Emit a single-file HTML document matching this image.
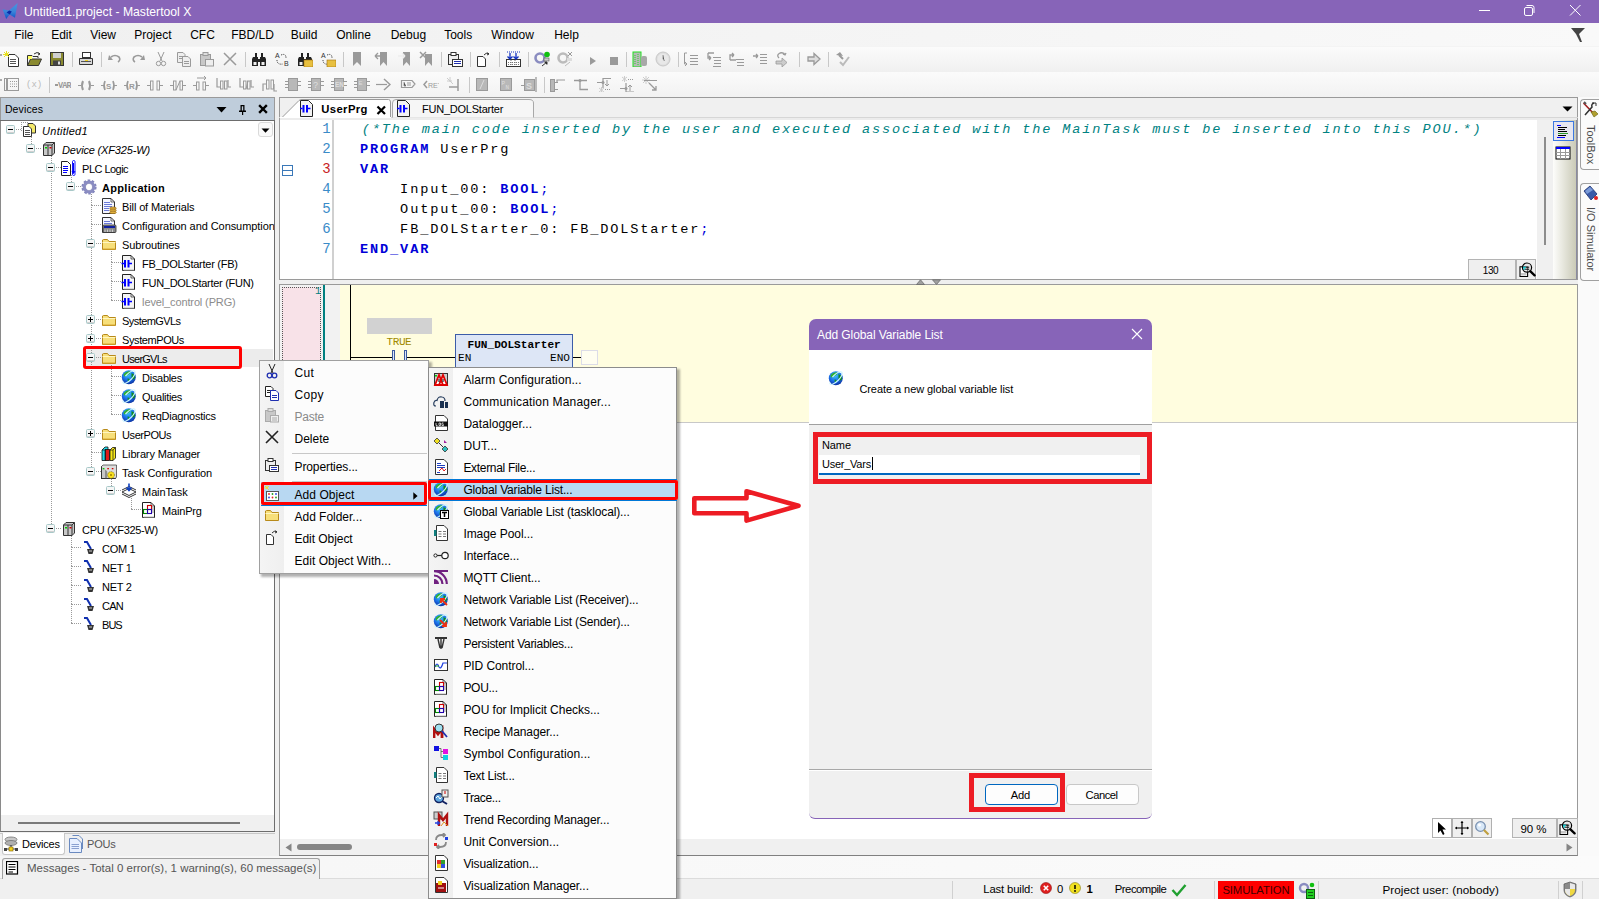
<!DOCTYPE html>
<html><head><meta charset="utf-8"><title>Mastertool X</title>
<style>
html,body{margin:0;padding:0;}
body{width:1599px;height:899px;overflow:hidden;position:relative;background:#f0f0f0;font-family:"Liberation Sans",sans-serif;}
body div, body svg{position:absolute;box-sizing:border-box;}
.t{white-space:pre;line-height:1;}
</style></head><body>
<div style="left:0px;top:0px;width:1599px;height:23px;background:#8764b8"></div>
<svg style="left:0px;top:0px;" width="20" height="22" viewBox="0 0 20 22"><defs><linearGradient id="lg1" x1="0" y1="0" x2="0" y2="1"><stop offset="0" stop-color="#4a94e0"/><stop offset="0.55" stop-color="#3a84d8"/><stop offset="1" stop-color="#0a50c8"/></linearGradient></defs><path d="M2.6 9.2 L9 10.6 L17.6 3 L15 17.8 L9.6 14.6 L6.2 19 Z" fill="url(#lg1)"/><path d="M6.6 12.6 L9.2 10.6 L11.8 11.6 L9.8 14.6 Z" fill="#0a2aa8"/></svg>
<div class="t" style="left:24px;top:5.67px;font-size:12.2px;color:#fff;font-weight:normal;font-style:normal;font-family:'Liberation Sans';">Untitled1.project - Mastertool X</div>
<div style="left:1479px;top:10px;width:11px;height:1px;background:#fff"></div>
<svg style="left:1522px;top:4px;" width="14" height="13" viewBox="0 0 14 13"><rect x="2.5" y="3.5" width="8" height="8" rx="1.5" fill="none" stroke="#fff"/><path d="M4.5 1.5 H10 a2 2 0 0 1 2 2 V9" fill="none" stroke="#fff"/></svg>
<svg style="left:1569px;top:4px;" width="13" height="13" viewBox="0 0 13 13"><path d="M1 1 L11.5 11.5 M11.5 1 L1 11.5" stroke="#fff" stroke-width="1"/></svg>
<div style="left:0px;top:23px;width:1599px;height:23px;background:linear-gradient(to right,#f0f0f0 0px,#f3f3f3 600px,#f9f9f9 1599px)"></div>
<div class="t" style="left:14.2px;top:28.84px;font-size:12px;color:#000;font-weight:normal;font-style:normal;font-family:'Liberation Sans';">File</div>
<div class="t" style="left:51.2px;top:28.84px;font-size:12px;color:#000;font-weight:normal;font-style:normal;font-family:'Liberation Sans';">Edit</div>
<div class="t" style="left:90.2px;top:28.84px;font-size:12px;color:#000;font-weight:normal;font-style:normal;font-family:'Liberation Sans';">View</div>
<div class="t" style="left:134.2px;top:28.84px;font-size:12px;color:#000;font-weight:normal;font-style:normal;font-family:'Liberation Sans';">Project</div>
<div class="t" style="left:190.2px;top:28.84px;font-size:12px;color:#000;font-weight:normal;font-style:normal;font-family:'Liberation Sans';">CFC</div>
<div class="t" style="left:231.2px;top:28.84px;font-size:12px;color:#000;font-weight:normal;font-style:normal;font-family:'Liberation Sans';">FBD/LD</div>
<div class="t" style="left:290.7px;top:28.84px;font-size:12px;color:#000;font-weight:normal;font-style:normal;font-family:'Liberation Sans';">Build</div>
<div class="t" style="left:336.2px;top:28.84px;font-size:12px;color:#000;font-weight:normal;font-style:normal;font-family:'Liberation Sans';">Online</div>
<div class="t" style="left:390.7px;top:28.84px;font-size:12px;color:#000;font-weight:normal;font-style:normal;font-family:'Liberation Sans';">Debug</div>
<div class="t" style="left:444.2px;top:28.84px;font-size:12px;color:#000;font-weight:normal;font-style:normal;font-family:'Liberation Sans';">Tools</div>
<div class="t" style="left:491.2px;top:28.84px;font-size:12px;color:#000;font-weight:normal;font-style:normal;font-family:'Liberation Sans';">Window</div>
<div class="t" style="left:554.2px;top:28.84px;font-size:12px;color:#000;font-weight:normal;font-style:normal;font-family:'Liberation Sans';">Help</div>
<svg style="left:1570px;top:27px;" width="16" height="16" viewBox="0 0 16 16"><path d="M1 1 H15 L9 7 L12 15 L10 15 L6 7 Z" fill="#444"/></svg>
<div style="left:0px;top:46px;width:1599px;height:1px;background:#f4f4f4"></div>
<div style="left:0px;top:47px;width:1599px;height:25px;background:linear-gradient(#fbfbfb,#f0f0f0)"></div>
<div style="left:0px;top:72px;width:1599px;height:25px;background:linear-gradient(#fbfbfb,#f2f2f2)"></div>
<svg style="left:3px;top:51px;" width="16" height="16" viewBox="0 0 16 16"><path d="M5.5 3.5 H12 L15.5 7 V15.5 H5.5 Z" fill="#fff" stroke="#333"/><path d="M7 8.5 H13 M7 10.5 H13 M7 12.5 H13" stroke="#555"/><path d="M1 1 L6 6 M3.5 0 V5 M0 3.5 H6 M6 1 L1 6" stroke="#e8e020" stroke-width="1"/></svg>
<svg style="left:26px;top:51px;" width="16" height="16" viewBox="0 0 16 16"><path d="M1.5 4.5 H6 L7 5.5 H12 V7" fill="none" stroke="#333"/><path d="M1.5 4.5 V14.5 H12.5 L15.5 8 H4.5 L1.5 14.5" fill="#8a8a30" stroke="#333"/><path d="M2 5 H6 V8 H2 Z" fill="#ffff60"/><path d="M8 3 Q11 0 14 3 M12.5 1.5 L14 3 L12 4" fill="none" stroke="#333"/></svg>
<svg style="left:49px;top:51px;" width="16" height="16" viewBox="0 0 16 16"><rect x="1.5" y="1.5" width="13" height="13" fill="#8a8a30" stroke="#333"/><rect x="4" y="2" width="8" height="5" fill="#d0d0d0"/><rect x="4" y="9.5" width="8" height="5" fill="#444"/><rect x="9" y="10.5" width="2" height="3" fill="#ddd"/></svg>
<div style="left:72px;top:52px;width:1px;height:15px;background:#c8c8c8"></div>
<svg style="left:78px;top:51px;" width="16" height="16" viewBox="0 0 16 16"><rect x="4.5" y="1.5" width="8" height="5" fill="#fff" stroke="#333"/><path d="M1.5 7.5 H14.5 V13.5 H1.5 Z" fill="#d8d8d8" stroke="#333"/><path d="M3 10.5 H13" stroke="#555"/><rect x="7" y="9" width="3" height="1" fill="#f0d020"/></svg>
<div style="left:101px;top:52px;width:1px;height:15px;background:#c8c8c8"></div>
<svg style="left:107px;top:51px;" width="16" height="16" viewBox="0 0 16 16"><path d="M4 6 Q8 3 12 6 Q14 9 11 11" fill="none" stroke="#9a9a9a" stroke-width="1.6"/><path d="M2 4 L6 9 L1 9 Z" fill="#9a9a9a"/></svg>
<svg style="left:130px;top:51px;" width="16" height="16" viewBox="0 0 16 16"><path d="M12 6 Q8 3 4 6 Q2 9 5 11" fill="none" stroke="#9a9a9a" stroke-width="1.6"/><path d="M14 4 L10 9 L15 9 Z" fill="#9a9a9a"/></svg>
<svg style="left:153px;top:51px;" width="16" height="16" viewBox="0 0 16 16"><path d="M5 1 L9 10 M11 1 L7 10" stroke="#9a9a9a"/><circle cx="5.5" cy="12.5" r="2.2" fill="none" stroke="#9a9a9a"/><circle cx="10.5" cy="12.5" r="2.2" fill="none" stroke="#9a9a9a"/></svg>
<svg style="left:176px;top:51px;" width="16" height="16" viewBox="0 0 16 16"><path d="M1.5 1.5 H7 L9 3.5 V11.5 H1.5 Z" fill="#eee" stroke="#9a9a9a"/><path d="M6.5 5.5 H12 L14.5 8 V15.5 H6.5 Z" fill="#eee" stroke="#9a9a9a"/><path d="M8 10.5 H13 M8 12.5 H13 M3 5.5 H7 M3 7.5 H6" stroke="#9a9a9a"/></svg>
<svg style="left:199px;top:51px;" width="16" height="16" viewBox="0 0 16 16"><rect x="1.5" y="3.5" width="10" height="11" fill="#c8c8c8" stroke="#9a9a9a"/><rect x="4" y="1.5" width="5" height="3" fill="#ddd" stroke="#9a9a9a"/><rect x="6.5" y="8.5" width="8" height="6.5" fill="#eee" stroke="#9a9a9a"/></svg>
<svg style="left:222px;top:51px;" width="16" height="16" viewBox="0 0 16 16"><path d="M2 2 L14 14 M14 2 L2 14" stroke="#9a9a9a" stroke-width="1.5"/></svg>
<div style="left:245px;top:52px;width:1px;height:15px;background:#c8c8c8"></div>
<svg style="left:250.5px;top:51px;" width="16" height="16" viewBox="0 0 16 16"><path d="M2 6 H7 V15 H1 V8 Z M9 6 H14 L15 8 V15 H9 Z" fill="#222"/><rect x="4" y="2" width="2" height="4" fill="#222"/><rect x="10" y="2" width="2" height="4" fill="#222"/><rect x="7" y="8" width="2" height="3" fill="#222"/><rect x="2.5" y="11" width="3" height="3" fill="#eee"/><rect x="10.5" y="11" width="3" height="3" fill="#eee"/></svg>
<svg style="left:273.5px;top:51px;" width="16" height="16" viewBox="0 0 16 16"><text x="1" y="7" font-size="7" font-family="Liberation Sans" fill="#333">A</text><text x="10" y="15" font-size="7" font-family="Liberation Sans" fill="#333">B</text><path d="M3 9 Q3 14 9 13 M7 4 Q12 2 12 7" fill="none" stroke="#333" stroke-dasharray="1 1"/></svg>
<svg style="left:296.5px;top:51px;" width="16" height="16" viewBox="0 0 16 16"><path d="M2 6 H7 V15 H1 V8 Z M9 6 H14 L15 8 V15 H9 Z" fill="#222"/><rect x="4" y="2" width="2" height="4" fill="#222"/><rect x="10" y="2" width="2" height="4" fill="#222"/><rect x="7" y="8" width="2" height="3" fill="#222"/><rect x="2.5" y="11" width="3" height="3" fill="#eee"/><rect x="10.5" y="11" width="3" height="3" fill="#eee"/><rect x="7" y="9" width="9" height="7" fill="#e8c040" stroke="#a07010" stroke-width="0.6"/></svg>
<svg style="left:319.5px;top:51px;" width="16" height="16" viewBox="0 0 16 16"><text x="1" y="7" font-size="7" font-family="Liberation Sans" fill="#333">A</text><text x="10" y="15" font-size="7" font-family="Liberation Sans" fill="#333">B</text><path d="M3 9 Q3 14 9 13 M7 4 Q12 2 12 7" fill="none" stroke="#333" stroke-dasharray="1 1"/><rect x="7" y="9" width="9" height="7" fill="#e8c040" stroke="#a07010" stroke-width="0.6"/></svg>
<div style="left:343px;top:52px;width:1px;height:15px;background:#c8c8c8"></div>
<svg style="left:349px;top:51px;" width="16" height="16" viewBox="0 0 16 16"><path d="M4 1 H12 V15 L8 11 L4 15 Z" fill="#9a9a9a"/></svg>
<svg style="left:373.5px;top:51px;" width="16" height="16" viewBox="0 0 16 16"><path d="M6 1 H13 V15 L9.5 11 L6 15 Z" fill="#9a9a9a"/><path d="M1 5 H7 M1 5 L4 2 M1 5 L4 8" stroke="#9a9a9a" stroke-width="1.3"/></svg>
<svg style="left:396.5px;top:51px;" width="16" height="16" viewBox="0 0 16 16"><path d="M6 1 H13 V15 L9.5 11 L6 15 Z" fill="#9a9a9a"/><path d="M1 5 H8 M8 5 L5 2 M8 5 L5 8" stroke="#eee" stroke-width="1.3"/></svg>
<svg style="left:419px;top:51px;" width="16" height="16" viewBox="0 0 16 16"><path d="M6 3 H13 V15 L9.5 11 L6 15 Z" fill="#9a9a9a"/><path d="M1 1 L7 7 M7 1 L1 7" stroke="#9a9a9a" stroke-width="1.5"/></svg>
<div style="left:441px;top:52px;width:1px;height:15px;background:#c8c8c8"></div>
<svg style="left:447px;top:51px;" width="16" height="16" viewBox="0 0 16 16"><rect x="1.5" y="3.5" width="10" height="10" fill="#eee" stroke="#333"/><rect x="4" y="1.5" width="5" height="3" fill="#fff" stroke="#333"/><rect x="5.5" y="8.5" width="10" height="7" fill="#fff" stroke="#333"/><path d="M7 10.5 H14 M7 12.5 H14" stroke="#2030b0"/></svg>
<div style="left:470px;top:52px;width:1px;height:15px;background:#c8c8c8"></div>
<svg style="left:476px;top:51px;" width="16" height="16" viewBox="0 0 16 16"><path d="M1.5 5.5 H7 L9.5 8 V15.5 H1.5 Z" fill="#fff" stroke="#333"/><path d="M8 4 Q10 1 13 3 M11.5 1.5 L13 3 L11 4" fill="none" stroke="#333"/></svg>
<div style="left:499px;top:52px;width:1px;height:15px;background:#c8c8c8"></div>
<svg style="left:505px;top:51px;" width="16" height="16" viewBox="0 0 16 16"><rect x="1.5" y="8.5" width="14" height="7" fill="#fff" stroke="#333"/><path d="M3 11.5 H14 M3 13.5 H14 M6 9 V15 M10 9 V15" stroke="#777" stroke-dasharray="1 1"/><path d="M5 2 V8 M2.5 5.5 L5 8 L7.5 5.5 M11 2 V8 M8.5 5.5 L11 8 L13.5 5.5" stroke="#1030c0" stroke-width="1.3" fill="none"/><path d="M2 1 H15" stroke="#1030c0" stroke-dasharray="1 1"/></svg>
<div style="left:528px;top:52px;width:1px;height:15px;background:#c8c8c8"></div>
<svg style="left:534px;top:51px;" width="16" height="16" viewBox="0 0 16 16"><circle cx="6" cy="7" r="4.5" fill="none" stroke="#8a8cc0" stroke-width="2.6"/><circle cx="13" cy="3.5" r="2.8" fill="#10c010"/><rect x="10" y="7" width="5" height="3" fill="#ccc" stroke="#555" stroke-width="0.6"/><path d="M8 15 L13 11 M10.5 11 H13 V13.5" stroke="#333"/></svg>
<svg style="left:557px;top:51px;" width="16" height="16" viewBox="0 0 16 16"><circle cx="6" cy="7" r="4.5" fill="none" stroke="#bbb" stroke-width="2.6"/><path d="M11 1 L15 5 M15 1 L11 5" stroke="#9a9a9a"/><rect x="10" y="7" width="5" height="3" fill="#ddd"/><path d="M8 15 L13 11" stroke="#bbb"/></svg>
<svg style="left:585px;top:51px;" width="16" height="16" viewBox="0 0 16 16"><path d="M5 6 L11 10 L5 14 Z" fill="#9a9a9a"/></svg>
<svg style="left:606px;top:51px;" width="16" height="16" viewBox="0 0 16 16"><rect x="4" y="6" width="8" height="8" fill="#9a9a9a"/></svg>
<div style="left:626px;top:52px;width:1px;height:15px;background:#c8c8c8"></div>
<svg style="left:632px;top:51px;" width="16" height="16" viewBox="0 0 16 16"><rect x="1" y="1" width="8" height="15" fill="#b8b8b8" stroke="#20e020"/><path d="M3 4 V13 M6 3 V14" stroke="#20e020" stroke-dasharray="1 1"/><rect x="9" y="5" width="6" height="10" rx="2" fill="#a8a8a8"/></svg>
<svg style="left:655px;top:51px;" width="16" height="16" viewBox="0 0 16 16"><circle cx="8" cy="8" r="7" fill="#ddd" stroke="#c8c8c8"/><circle cx="8" cy="8" r="5.5" fill="#e8e8e8"/><path d="M8 4 V8 L9.5 10" stroke="#999" stroke-width="1"/></svg>
<div style="left:678px;top:52px;width:1px;height:15px;background:#c8c8c8"></div>
<svg style="left:683px;top:51px;" width="16" height="16" viewBox="0 0 16 16"><path d="M4 2 H1.5 V13 H4 M4 13 L2 11 M4 13 L2 15" stroke="#9a9a9a" fill="none"/><path d="M7 4.5 H15 M7 7.5 H15 M7 10.5 H15 M7 13.5 H15" stroke="#9a9a9a"/></svg>
<svg style="left:706px;top:51px;" width="16" height="16" viewBox="0 0 16 16"><path d="M2 2 H8 M2 2 V7 H5 M5 7 L3 5 M5 7 L3 9" stroke="#9a9a9a" fill="none" stroke-width="1.3"/><path d="M7 6.5 H15 M8 9.5 H15 M8 12.5 H15 M7 15.5 H15" stroke="#9a9a9a"/></svg>
<svg style="left:729px;top:51px;" width="16" height="16" viewBox="0 0 16 16"><path d="M1 9 V4 H5 M5 4 L3 2 M5 4 L3 6 M1 9 H7" stroke="#9a9a9a" fill="none" stroke-width="1.3"/><path d="M7 8.5 H15 M8 11.5 H15 M8 14.5 H15" stroke="#9a9a9a"/></svg>
<svg style="left:752px;top:51px;" width="16" height="16" viewBox="0 0 16 16"><path d="M1 5 H6 M6 5 L4 3 M6 5 L4 7" stroke="#9a9a9a" stroke-width="1.3" fill="none"/><path d="M8 3.5 H15 M8 6.5 H15 M8 9.5 H15 M8 12.5 H15" stroke="#9a9a9a"/></svg>
<svg style="left:775px;top:51px;" width="16" height="16" viewBox="0 0 16 16"><path d="M4 7 Q1 4 5 2 Q9 1 10 4 M8 3 L10 4 L11 2" fill="none" stroke="#9a9a9a" stroke-width="1.3"/><path d="M1 10 H7 V7 L12 11.5 L7 16 V13 H1 Z" fill="#ccc" stroke="#9a9a9a" stroke-width="0.8"/></svg>
<div style="left:799px;top:52px;width:1px;height:15px;background:#c8c8c8"></div>
<svg style="left:806px;top:51px;" width="16" height="16" viewBox="0 0 16 16"><path d="M2 6 H8 V2.5 L14 8 L8 13.5 V10 H2 Z" fill="#ddd" stroke="#9a9a9a" stroke-width="1.3"/></svg>
<div style="left:828px;top:52px;width:1px;height:15px;background:#c8c8c8"></div>
<svg style="left:834px;top:51px;" width="16" height="16" viewBox="0 0 16 16"><path d="M2 4 L6 1 L9 5 Z" fill="#9a9a9a"/><path d="M5 4 L9 8" stroke="#9a9a9a" stroke-width="2"/><path d="M6 11 L9 14 L15 6" fill="none" stroke="#bbb" stroke-width="2"/></svg>
<svg style="left:3px;top:76px;" width="16" height="16" viewBox="0 0 16 16"><rect x="1.5" y="2.5" width="14" height="12" fill="none" stroke="#9a9a9a"/><path d="M4 3 V15" stroke="#9a9a9a" stroke-width="2"/><path d="M7 5.5 H15 M7 8 H15 M7 10.5 H15" stroke="#9a9a9a" stroke-dasharray="1 1"/></svg>
<svg style="left:26px;top:76px;" width="16" height="16" viewBox="0 0 16 16"><text x="0" y="11" font-size="9" font-family="Liberation Mono" fill="#bbb">(x)</text></svg>
<div style="left:49px;top:77px;width:1px;height:16px;background:#c8c8c8"></div>
<svg style="left:54.5px;top:76px;" width="16" height="16" viewBox="0 0 16 16"><rect x="0" y="8" width="3" height="2" fill="#9a9a9a"/><text x="3" y="12" font-size="8.5" font-family="Liberation Mono" font-weight="bold" fill="#9a9a9a" letter-spacing="-0.8">VAR</text></svg>
<svg style="left:78px;top:76px;" width="16" height="16" viewBox="0 0 16 16"><path d="M0 9.5 H3 M13 9.5 H16" stroke="#9a9a9a" stroke-width="1.2"/><path d="M5 5 Q3 9.5 5 14 M11 5 Q13 9.5 11 14" fill="none" stroke="#9a9a9a" stroke-width="2"/></svg>
<svg style="left:101px;top:76px;" width="16" height="16" viewBox="0 0 16 16"><path d="M0 9.5 H3 M13 9.5 H16" stroke="#9a9a9a" stroke-width="1.2"/><path d="M4 5 Q2 9.5 4 14 M12 5 Q14 9.5 12 14" fill="none" stroke="#9a9a9a" stroke-width="1.6"/><text x="5" y="13" font-size="8" font-family="Liberation Sans" font-weight="bold" fill="#9a9a9a">S</text></svg>
<svg style="left:124px;top:76px;" width="16" height="16" viewBox="0 0 16 16"><path d="M0 9.5 H3 M13 9.5 H16" stroke="#9a9a9a" stroke-width="1.2"/><path d="M4 5 Q2 9.5 4 14 M12 5 Q14 9.5 12 14" fill="none" stroke="#9a9a9a" stroke-width="1.6"/><text x="5" y="13" font-size="8" font-family="Liberation Sans" font-weight="bold" fill="#9a9a9a">R</text></svg>
<svg style="left:147px;top:76px;" width="16" height="16" viewBox="0 0 16 16"><path d="M0 9.5 H3 M13 9.5 H16" stroke="#9a9a9a" stroke-width="1.2"/><rect x="3.5" y="5" width="2.5" height="9" fill="none" stroke="#9a9a9a"/><rect x="10" y="5" width="2.5" height="9" fill="none" stroke="#9a9a9a"/></svg>
<svg style="left:170px;top:76px;" width="16" height="16" viewBox="0 0 16 16"><path d="M0 9.5 H3 M13 9.5 H16" stroke="#9a9a9a" stroke-width="1.2"/><rect x="3.5" y="5" width="2.5" height="9" fill="none" stroke="#9a9a9a"/><rect x="10" y="5" width="2.5" height="9" fill="none" stroke="#9a9a9a"/><path d="M6 14 L10 5" stroke="#9a9a9a"/></svg>
<svg style="left:193px;top:76px;" width="16" height="16" viewBox="0 0 16 16"><path d="M0 9.5 H3 M13 9.5 H16" stroke="#9a9a9a" stroke-width="1.2"/><rect x="3.5" y="6" width="2.5" height="8" fill="none" stroke="#9a9a9a"/><rect x="10" y="6" width="2.5" height="8" fill="none" stroke="#9a9a9a"/><path d="M4 2 H13 M11 0 L13 2 L11 4" stroke="#9a9a9a" fill="none"/></svg>
<svg style="left:216px;top:76px;" width="16" height="16" viewBox="0 0 16 16"><path d="M1 2 V11 H4 M12 4 V11 H15" stroke="#9a9a9a" fill="none" stroke-width="1.2"/><rect x="4.5" y="5" width="2.5" height="8" fill="none" stroke="#9a9a9a"/><rect x="8.5" y="5" width="2.5" height="8" fill="none" stroke="#9a9a9a"/></svg>
<svg style="left:239px;top:76px;" width="16" height="16" viewBox="0 0 16 16"><path d="M1 2 V11 H4 M12 4 V11 H15" stroke="#9a9a9a" fill="none" stroke-width="1.2"/><rect x="4.5" y="5" width="2.5" height="8" fill="none" stroke="#9a9a9a"/><rect x="8.5" y="5" width="2.5" height="8" fill="none" stroke="#9a9a9a"/><path d="M7 13 L9 5" stroke="#9a9a9a"/></svg>
<svg style="left:262px;top:76px;" width="16" height="16" viewBox="0 0 16 16"><path d="M1 15 V8 H4 M12 8 V15 H15" stroke="#9a9a9a" fill="none" stroke-width="1.2"/><rect x="4.5" y="4" width="2.5" height="9" fill="none" stroke="#9a9a9a"/><rect x="9" y="4" width="2.5" height="9" fill="none" stroke="#9a9a9a"/></svg>
<svg style="left:285px;top:76px;" width="16" height="16" viewBox="0 0 16 16"><path d="M0 5.5 H3 M0 8.5 H3 M0 11.5 H3 M13 5.5 H16 M13 9.5 H16" stroke="#9a9a9a"/><rect x="3.5" y="2.5" width="9" height="12" fill="#b8b8b8" stroke="#9a9a9a"/></svg>
<svg style="left:308px;top:76px;" width="16" height="16" viewBox="0 0 16 16"><path d="M0 5.5 H3 M0 8.5 H3 M0 11.5 H3 M13 5.5 H16 M13 9.5 H16" stroke="#9a9a9a"/><rect x="3.5" y="2.5" width="9" height="12" fill="#b8b8b8" stroke="#9a9a9a"/><text x="5" y="12" font-size="9" font-family="Liberation Sans" fill="#ddd">?</text></svg>
<svg style="left:331px;top:76px;" width="16" height="16" viewBox="0 0 16 16"><path d="M0 5.5 H3 M0 8.5 H3 M0 11.5 H3 M13 5.5 H16 M13 9.5 H16" stroke="#9a9a9a"/><rect x="3.5" y="2.5" width="9" height="12" fill="#b8b8b8" stroke="#9a9a9a"/><text x="4" y="11" font-size="6.5" font-family="Liberation Sans" font-weight="bold" fill="#ddd">EN</text></svg>
<svg style="left:354px;top:76px;" width="16" height="16" viewBox="0 0 16 16"><path d="M0 5.5 H3 M0 8.5 H3 M0 11.5 H3 M13 5.5 H16 M13 9.5 H16" stroke="#9a9a9a"/><rect x="3.5" y="2.5" width="9" height="12" fill="#b8b8b8" stroke="#9a9a9a"/><text x="4.5" y="9" font-size="6" font-family="Liberation Sans" fill="#ddd">E</text></svg>
<svg style="left:375px;top:76px;" width="16" height="16" viewBox="0 0 16 16"><path d="M1 8.5 H12" stroke="#9a9a9a" stroke-width="1.2"/><path d="M9 3 L15 8.5 L9 14" fill="none" stroke="#9a9a9a" stroke-width="1.5"/></svg>
<svg style="left:400px;top:76px;" width="16" height="16" viewBox="0 0 16 16"><path d="M1.5 4.5 H12 L15 8 L12 11.5 H1.5 Z" fill="none" stroke="#9a9a9a" stroke-width="1.2"/><path d="M4 6 V10 H6 M8 6 V10 M10 6 V10" stroke="#9a9a9a"/></svg>
<svg style="left:423px;top:76px;" width="16" height="16" viewBox="0 0 16 16"><path d="M4 5 L1 8.5 L4 12" fill="none" stroke="#9a9a9a" stroke-width="1.5"/><text x="5" y="12" font-size="7" font-family="Liberation Sans" fill="#9a9a9a">RET</text></svg>
<svg style="left:446px;top:76px;" width="16" height="16" viewBox="0 0 16 16"><path d="M1 2 L7 8 M4 1 V6 M1 5 H6" stroke="#ccc"/><path d="M3 11 H12 M12 3 V15" stroke="#9a9a9a" stroke-width="1.5"/></svg>
<div style="left:469px;top:77px;width:1px;height:16px;background:#c8c8c8"></div>
<svg style="left:474px;top:76px;" width="16" height="16" viewBox="0 0 16 16"><rect x="2.5" y="2.5" width="11" height="12" fill="#b8b8b8" stroke="#9a9a9a"/><path d="M6 13 L10 4" stroke="#ddd"/></svg>
<svg style="left:498px;top:76px;" width="16" height="16" viewBox="0 0 16 16"><rect x="2.5" y="2.5" width="11" height="12" fill="#b8b8b8" stroke="#9a9a9a"/><text x="3.5" y="9" font-size="6" font-family="Liberation Mono" fill="#ddd">P</text><text x="7.5" y="13" font-size="6" font-family="Liberation Mono" fill="#ddd">N</text></svg>
<svg style="left:521px;top:76px;" width="16" height="16" viewBox="0 0 16 16"><path d="M0 9.5 H3" stroke="#9a9a9a"/><rect x="3.5" y="3.5" width="10" height="11" fill="#b8b8b8" stroke="#9a9a9a"/><text x="5" y="13" font-size="9" font-family="Liberation Sans" font-weight="bold" fill="#ddd">S</text><path d="M15 1 V16" stroke="#9a9a9a" stroke-width="1.3"/></svg>
<div style="left:544px;top:77px;width:1px;height:16px;background:#c8c8c8"></div>
<svg style="left:550px;top:76px;" width="16" height="16" viewBox="0 0 16 16"><rect x="0.5" y="3.5" width="4" height="12" fill="#b8b8b8" stroke="#9a9a9a"/><path d="M4 6.5 H8 M4 13.5 H8 M7 6.5 V4 H15" stroke="#9a9a9a" fill="none" stroke-width="1.2"/></svg>
<svg style="left:573px;top:76px;" width="16" height="16" viewBox="0 0 16 16"><path d="M1 4.5 H14 M7 4.5 V13.5 H15" stroke="#9a9a9a" fill="none" stroke-width="1.3"/><circle cx="7" cy="4.5" r="1.5" fill="#9a9a9a"/></svg>
<svg style="left:596px;top:76px;" width="16" height="16" viewBox="0 0 16 16"><path d="M1 6.5 H7 V2.5 H15 M7 6.5 V12" stroke="#9a9a9a" fill="none" stroke-width="1.2"/><circle cx="7" cy="6.5" r="1.5" fill="#9a9a9a"/><path d="M11 4 V10 M9 8 L11 10 L13 8" stroke="#9a9a9a" fill="none"/><path d="M3 12 L8 16 M3 16 L8 12 M5.5 11 V17" stroke="#ccc"/><path d="M9 13.5 H15" stroke="#9a9a9a" stroke-dasharray="1 1"/></svg>
<svg style="left:619px;top:76px;" width="16" height="16" viewBox="0 0 16 16"><path d="M1 12.5 H7 V16 H15 M7 12.5 V7" stroke="#9a9a9a" fill="none" stroke-width="1.2"/><circle cx="7" cy="12.5" r="1.5" fill="#9a9a9a"/><path d="M11 15 V9 M9 11 L11 9 L13 11" stroke="#9a9a9a" fill="none"/><path d="M3 1 L8 5 M3 5 L8 1 M5.5 0 V6" stroke="#ccc"/><path d="M9 3.5 H15" stroke="#9a9a9a" stroke-dasharray="1 1"/></svg>
<svg style="left:642px;top:76px;" width="16" height="16" viewBox="0 0 16 16"><path d="M1 1 L7 7 M1 7 L7 1 M4 0 V8 M0 4 H8" stroke="#ccc"/><path d="M2 4.5 H15" stroke="#9a9a9a"/><path d="M7 7 L14 14 M14 10 V14 H10" stroke="#9a9a9a" stroke-width="1.3" fill="none"/></svg>
<div style="left:0px;top:54px;width:2px;height:2px;background:#aaa"></div>
<div style="left:0px;top:79px;width:2px;height:2px;background:#aaa"></div>
<div style="left:1578px;top:97px;width:21px;height:759px;background:#fafafa"></div>
<div style="left:0px;top:97px;width:275px;height:24px;background:#bfcddb;border-top:1px solid #9a9a9a;border-left:1px solid #9a9a9a;border-right:1px solid #9a9a9a"></div>
<div style="left:0px;top:120px;width:275px;height:1px;background:#6d6d6d"></div>
<div class="t" style="left:4.9px;top:104.41px;font-size:10.5px;color:#000;font-weight:normal;font-style:normal;font-family:'Liberation Sans';letter-spacing:0.133px;">Devices</div>
<svg style="left:215px;top:106px;" width="14" height="8" viewBox="0 0 14 8"><path d="M1.5 1 H11.5 L6.5 6.5 Z" fill="#000"/></svg>
<svg style="left:237px;top:103px;" width="11" height="13" viewBox="0 0 11 13"><path d="M3.5 2 H7.5 V7.5 H9 V9 H2 V7.5 H3.5 Z M4.8 3.2 V7.5 H6.2 V3.2 Z" fill="#000"/><rect x="5" y="9" width="1.2" height="3" fill="#000"/></svg>
<svg style="left:257px;top:103px;" width="12" height="12" viewBox="0 0 12 12"><path d="M3 3 L9 9 M9 3 L3 9" stroke="#000" stroke-width="2.4" stroke-linecap="square"/></svg>
<div style="left:0px;top:121px;width:275px;height:711px;background:#fff;border-left:1px solid #8a8a8a;border-right:1px solid #6d6d6d;border-bottom:1px solid #6d6d6d"></div>
<div style="left:1px;top:815px;width:273px;height:16px;background:#f0f0f0"></div>
<div style="left:18px;top:822px;width:222px;height:2px;background:#7a7a7a"></div>
<div style="left:258px;top:122px;width:15px;height:15px;background:#fafafa;border:1px solid #dadada;border-radius:3px"></div>
<svg style="left:261px;top:128px;" width="10" height="6" viewBox="0 0 10 6"><path d="M0.5 0.5 H8.5 L4.5 4.8 Z" fill="#000"/></svg>
<div style="left:0px;top:833px;width:275px;height:1px;background:#c8c8c8"></div>
<div style="left:2px;top:833px;width:63px;height:22px;background:#fff;border:1px solid #c8c8c8;border-top:none;border-radius:0 0 3px 3px"></div>
<div class="t" style="left:22px;top:838.69px;font-size:11px;color:#000;font-weight:normal;font-style:normal;font-family:'Liberation Sans';letter-spacing:-0.2px;">Devices</div>
<div class="t" style="left:87px;top:838.69px;font-size:11px;color:#555;font-weight:normal;font-style:normal;font-family:'Liberation Sans';letter-spacing:-0.2px;">POUs</div>
<div style="left:84px;top:349px;width:189px;height:18px;background:#ececec"></div>
<div style="left:11px;top:129px;width:10px;height:1px;border-top:1px dotted #9a9a9a"></div>
<div style="left:31px;top:148px;width:10px;height:1px;border-top:1px dotted #9a9a9a"></div>
<div style="left:31px;top:137px;width:1px;height:11px;border-left:1px dotted #9a9a9a"></div>
<div style="left:51px;top:167px;width:10px;height:1px;border-top:1px dotted #9a9a9a"></div>
<div style="left:51px;top:156px;width:1px;height:11px;border-left:1px dotted #9a9a9a"></div>
<div style="left:71px;top:186px;width:10px;height:1px;border-top:1px dotted #9a9a9a"></div>
<div style="left:71px;top:175px;width:1px;height:11px;border-left:1px dotted #9a9a9a"></div>
<div style="left:91px;top:205px;width:10px;height:1px;border-top:1px dotted #9a9a9a"></div>
<div style="left:91px;top:194px;width:1px;height:11px;border-left:1px dotted #9a9a9a"></div>
<div style="left:91px;top:224px;width:10px;height:1px;border-top:1px dotted #9a9a9a"></div>
<div style="left:91px;top:205px;width:1px;height:19px;border-left:1px dotted #9a9a9a"></div>
<div style="left:91px;top:243px;width:10px;height:1px;border-top:1px dotted #9a9a9a"></div>
<div style="left:91px;top:224px;width:1px;height:19px;border-left:1px dotted #9a9a9a"></div>
<div style="left:111px;top:262px;width:10px;height:1px;border-top:1px dotted #9a9a9a"></div>
<div style="left:111px;top:251px;width:1px;height:11px;border-left:1px dotted #9a9a9a"></div>
<div style="left:111px;top:281px;width:10px;height:1px;border-top:1px dotted #9a9a9a"></div>
<div style="left:111px;top:262px;width:1px;height:19px;border-left:1px dotted #9a9a9a"></div>
<div style="left:111px;top:300px;width:10px;height:1px;border-top:1px dotted #9a9a9a"></div>
<div style="left:111px;top:281px;width:1px;height:19px;border-left:1px dotted #9a9a9a"></div>
<div style="left:91px;top:319px;width:10px;height:1px;border-top:1px dotted #9a9a9a"></div>
<div style="left:91px;top:243px;width:1px;height:76px;border-left:1px dotted #9a9a9a"></div>
<div style="left:91px;top:338px;width:10px;height:1px;border-top:1px dotted #9a9a9a"></div>
<div style="left:91px;top:319px;width:1px;height:19px;border-left:1px dotted #9a9a9a"></div>
<div style="left:91px;top:357px;width:10px;height:1px;border-top:1px dotted #9a9a9a"></div>
<div style="left:91px;top:338px;width:1px;height:19px;border-left:1px dotted #9a9a9a"></div>
<div style="left:111px;top:376px;width:10px;height:1px;border-top:1px dotted #9a9a9a"></div>
<div style="left:111px;top:365px;width:1px;height:11px;border-left:1px dotted #9a9a9a"></div>
<div style="left:111px;top:395px;width:10px;height:1px;border-top:1px dotted #9a9a9a"></div>
<div style="left:111px;top:376px;width:1px;height:19px;border-left:1px dotted #9a9a9a"></div>
<div style="left:111px;top:414px;width:10px;height:1px;border-top:1px dotted #9a9a9a"></div>
<div style="left:111px;top:395px;width:1px;height:19px;border-left:1px dotted #9a9a9a"></div>
<div style="left:91px;top:433px;width:10px;height:1px;border-top:1px dotted #9a9a9a"></div>
<div style="left:91px;top:357px;width:1px;height:76px;border-left:1px dotted #9a9a9a"></div>
<div style="left:91px;top:452px;width:10px;height:1px;border-top:1px dotted #9a9a9a"></div>
<div style="left:91px;top:433px;width:1px;height:19px;border-left:1px dotted #9a9a9a"></div>
<div style="left:91px;top:471px;width:10px;height:1px;border-top:1px dotted #9a9a9a"></div>
<div style="left:91px;top:452px;width:1px;height:19px;border-left:1px dotted #9a9a9a"></div>
<div style="left:111px;top:490px;width:10px;height:1px;border-top:1px dotted #9a9a9a"></div>
<div style="left:111px;top:479px;width:1px;height:11px;border-left:1px dotted #9a9a9a"></div>
<div style="left:131px;top:509px;width:10px;height:1px;border-top:1px dotted #9a9a9a"></div>
<div style="left:131px;top:498px;width:1px;height:11px;border-left:1px dotted #9a9a9a"></div>
<div style="left:51px;top:528px;width:10px;height:1px;border-top:1px dotted #9a9a9a"></div>
<div style="left:51px;top:167px;width:1px;height:361px;border-left:1px dotted #9a9a9a"></div>
<div style="left:71px;top:547px;width:10px;height:1px;border-top:1px dotted #9a9a9a"></div>
<div style="left:71px;top:536px;width:1px;height:11px;border-left:1px dotted #9a9a9a"></div>
<div style="left:71px;top:566px;width:10px;height:1px;border-top:1px dotted #9a9a9a"></div>
<div style="left:71px;top:547px;width:1px;height:19px;border-left:1px dotted #9a9a9a"></div>
<div style="left:71px;top:585px;width:10px;height:1px;border-top:1px dotted #9a9a9a"></div>
<div style="left:71px;top:566px;width:1px;height:19px;border-left:1px dotted #9a9a9a"></div>
<div style="left:71px;top:604px;width:10px;height:1px;border-top:1px dotted #9a9a9a"></div>
<div style="left:71px;top:585px;width:1px;height:19px;border-left:1px dotted #9a9a9a"></div>
<div style="left:71px;top:623px;width:10px;height:1px;border-top:1px dotted #9a9a9a"></div>
<div style="left:71px;top:604px;width:1px;height:19px;border-left:1px dotted #9a9a9a"></div>
<div style="left:21px;top:122px;width:7px;height:9px;border-left:1px dotted #9a9a9a;border-top:1px dotted #9a9a9a"></div>
<svg style="left:6px;top:125px;" width="9" height="9" viewBox="0 0 9 9"><rect x="0.5" y="0.5" width="8" height="8" rx="1" fill="#f6f6f6" stroke="#a8c8c8"/><path d="M1 7.5 H8" stroke="#d0d0d0"/><path d="M2 4.5 H7" stroke="#000"/></svg>
<svg style="left:21px;top:122px;" width="16" height="16" viewBox="0 0 16 16"><path d="M7 1.5 H12 L14.5 4 V11 H7 Z" fill="#f4e96a" stroke="#333"/><path d="M2.5 4.5 H8 L10.5 7 V14.5 H2.5 Z" fill="#fff" stroke="#333"/><path d="M4 8.5 H9 M4 10.5 H9 M4 12.5 H9" stroke="#555"/></svg>
<div class="t" style="left:42.1px;top:125.59px;font-size:11px;color:#000;font-weight:normal;font-style:italic;font-family:'Liberation Sans';letter-spacing:0.25px;">Untitled1</div>
<svg style="left:26px;top:144px;" width="9" height="9" viewBox="0 0 9 9"><rect x="0.5" y="0.5" width="8" height="8" rx="1" fill="#f6f6f6" stroke="#a8c8c8"/><path d="M1 7.5 H8" stroke="#d0d0d0"/><path d="M2 4.5 H7" stroke="#000"/></svg>
<svg style="left:41px;top:141px;" width="16" height="16" viewBox="0 0 16 16"><path d="M2.5 4 L5 1.5 H13.5 V12 L11 14.5 H2.5 Z" fill="#c8c8c8" stroke="#333"/><path d="M2.5 4 H11 V14.5 M11 4 L13.5 1.5 M7 4 V14.5" fill="none" stroke="#333"/><rect x="4" y="6" width="2" height="1.5" fill="#0c0"/><rect x="8.5" y="6" width="2" height="1.5" fill="#c00"/></svg>
<div class="t" style="left:62.1px;top:144.59px;font-size:11px;color:#000;font-weight:normal;font-style:italic;font-family:'Liberation Sans';letter-spacing:-0.167px;">Device (XF325-W)</div>
<svg style="left:46px;top:163px;" width="9" height="9" viewBox="0 0 9 9"><rect x="0.5" y="0.5" width="8" height="8" rx="1" fill="#f6f6f6" stroke="#a8c8c8"/><path d="M1 7.5 H8" stroke="#d0d0d0"/><path d="M2 4.5 H7" stroke="#000"/></svg>
<svg style="left:61px;top:160px;" width="16" height="16" viewBox="0 0 16 16"><path d="M0.5 1.5 H6.5 L9.5 4.5 V15.5 H0.5 Z" fill="#fff" stroke="#222"/><path d="M2 6.5 H7 M2 8.5 H7 M2 10.5 H7 M2 12.5 H6" stroke="#00f"/><path d="M12.5 3 V13 M11 11 L12.5 13.5 L14 11" fill="none" stroke="#00f" stroke-width="1"/><rect x="11.5" y="0.5" width="2.5" height="15" rx="1.2" fill="none" stroke="#00f" stroke-width="0.9"/></svg>
<div class="t" style="left:82.10000000000001px;top:163.59px;font-size:11px;color:#000;font-weight:normal;font-style:normal;font-family:'Liberation Sans';letter-spacing:-0.537px;">PLC Logic</div>
<svg style="left:66px;top:182px;" width="9" height="9" viewBox="0 0 9 9"><rect x="0.5" y="0.5" width="8" height="8" rx="1" fill="#f6f6f6" stroke="#a8c8c8"/><path d="M1 7.5 H8" stroke="#d0d0d0"/><path d="M2 4.5 H7" stroke="#000"/></svg>
<svg style="left:81px;top:179px;" width="16" height="16" viewBox="0 0 16 16"><circle cx="8" cy="8" r="6.3" fill="none" stroke="#8486bc" stroke-width="2.6" stroke-dasharray="2.4 1.55"/><circle cx="8" cy="8" r="4.9" fill="none" stroke="#8a8cc2" stroke-width="3"/><circle cx="8" cy="8" r="3.3" fill="none" stroke="#6a6ca0" stroke-width="0.6"/><circle cx="8" cy="8" r="2.9" fill="#fff"/></svg>
<div class="t" style="left:102.10000000000001px;top:182.59px;font-size:11px;color:#000;font-weight:bold;font-style:normal;font-family:'Liberation Sans';letter-spacing:0.28px;">Application</div>
<svg style="left:101px;top:198px;" width="16" height="16" viewBox="0 0 16 16"><path d="M1.5 0.5 H10 L13.5 4 V15.5 H1.5 Z" fill="#f4f6ff" stroke="#333"/><path d="M10 0.5 V4 H13.5" fill="none" stroke="#333" stroke-width="0.7"/><path d="M3 4.5 H9 M3 6.5 H11 M3 8.5 H11 M3 10.5 H8 M3 12.5 H8" stroke="#6a7ad8"/><ellipse cx="12" cy="10.2" rx="3.3" ry="1.3" fill="#e0b040" stroke="#8a6010" stroke-width="0.6"/><ellipse cx="12" cy="12.3" rx="3.3" ry="1.3" fill="#e0b040" stroke="#8a6010" stroke-width="0.6"/><ellipse cx="12" cy="14.4" rx="3.3" ry="1.3" fill="#e0b040" stroke="#8a6010" stroke-width="0.6"/></svg>
<div class="t" style="left:122.10000000000001px;top:201.59px;font-size:11px;color:#000;font-weight:normal;font-style:normal;font-family:'Liberation Sans';letter-spacing:-0.138px;">Bill of Materials</div>
<svg style="left:101px;top:217px;" width="16" height="16" viewBox="0 0 16 16"><path d="M1.5 0.5 H10 L13.5 4 V15.5 H1.5 Z" fill="#f4f6ff" stroke="#333"/><path d="M10 0.5 V4 H13.5" fill="none" stroke="#333" stroke-width="0.7"/><path d="M3 4.5 H9 M3 6.5 H11" stroke="#6a7ad8"/><rect x="2" y="8" width="13" height="7.5" rx="1" fill="#8a8a8a" stroke="#333" stroke-width="0.8"/><rect x="3" y="9" width="11" height="2" fill="#1020a0"/><path d="M4 12.5 V15 M6.5 12.5 V15 M9 12.5 V15 M11.5 12.5 V15" stroke="#ddd" stroke-width="0.8"/></svg>
<div class="t" style="left:122.10000000000001px;top:220.59px;font-size:11px;color:#000;font-weight:normal;font-style:normal;font-family:'Liberation Sans';letter-spacing:-0.071px;">Configuration and Consumption</div>
<svg style="left:86px;top:239px;" width="9" height="9" viewBox="0 0 9 9"><rect x="0.5" y="0.5" width="8" height="8" rx="1" fill="#f6f6f6" stroke="#a8c8c8"/><path d="M1 7.5 H8" stroke="#d0d0d0"/><path d="M2 4.5 H7" stroke="#000"/></svg>
<svg style="left:101px;top:236px;" width="16" height="16" viewBox="0 0 16 16"><path d="M1.5 4 V13.5 H14.5 V5.5 H8 L6.5 3.5 H2.5 Z" fill="#f7df7a" stroke="#b88a1a"/><path d="M1.5 6.5 H14.5" stroke="#fff6c0"/><path d="M2 13 H14" stroke="#d8a830"/></svg>
<div class="t" style="left:122.10000000000001px;top:239.59px;font-size:11px;color:#000;font-weight:normal;font-style:normal;font-family:'Liberation Sans';letter-spacing:-0.11px;">Subroutines</div>
<svg style="left:121px;top:255px;" width="16" height="16" viewBox="0 0 16 16"><path d="M1.5 0.5 H10 L13.5 4 V15.5 H1.5 Z" fill="#f4f4f4" stroke="#222"/><path d="M10 0.5 V4 H13.5" fill="none" stroke="#222" stroke-width="0.7"/><path d="M2.5 15 H13" stroke="#bbb"/><path d="M0.5 8.5 H3 M8 8.5 H11" stroke="#00f" stroke-width="1.4"/><rect x="3" y="5" width="2" height="7.5" fill="#00f"/><rect x="6.5" y="5" width="2" height="7.5" fill="#00f"/></svg>
<div class="t" style="left:142.1px;top:258.59px;font-size:11px;color:#000;font-weight:normal;font-style:normal;font-family:'Liberation Sans';letter-spacing:-0.259px;">FB_DOLStarter (FB)</div>
<svg style="left:121px;top:274px;" width="16" height="16" viewBox="0 0 16 16"><path d="M1.5 0.5 H10 L13.5 4 V15.5 H1.5 Z" fill="#f4f4f4" stroke="#222"/><path d="M10 0.5 V4 H13.5" fill="none" stroke="#222" stroke-width="0.7"/><path d="M2.5 15 H13" stroke="#bbb"/><path d="M0.5 8.5 H3 M8 8.5 H11" stroke="#00f" stroke-width="1.4"/><rect x="3" y="5" width="2" height="7.5" fill="#00f"/><rect x="6.5" y="5" width="2" height="7.5" fill="#00f"/></svg>
<div class="t" style="left:142.1px;top:277.59px;font-size:11px;color:#000;font-weight:normal;font-style:normal;font-family:'Liberation Sans';letter-spacing:-0.289px;">FUN_DOLStarter (FUN)</div>
<svg style="left:121px;top:293px;" width="16" height="16" viewBox="0 0 16 16"><path d="M1.5 0.5 H10 L13.5 4 V15.5 H1.5 Z" fill="#f4f4f4" stroke="#222"/><path d="M10 0.5 V4 H13.5" fill="none" stroke="#222" stroke-width="0.7"/><path d="M2.5 15 H13" stroke="#bbb"/><path d="M0.5 8.5 H3 M8 8.5 H11" stroke="#00f" stroke-width="1.4"/><rect x="3" y="5" width="2" height="7.5" fill="#00f"/><rect x="6.5" y="5" width="2" height="7.5" fill="#00f"/></svg>
<div class="t" style="left:142.1px;top:296.59px;font-size:11px;color:#8c8c8c;font-weight:normal;font-style:normal;font-family:'Liberation Sans';letter-spacing:-0.128px;">level_control (PRG)</div>
<svg style="left:86px;top:315px;" width="9" height="9" viewBox="0 0 9 9"><rect x="0.5" y="0.5" width="8" height="8" rx="1" fill="#f6f6f6" stroke="#a8c8c8"/><path d="M1 7.5 H8" stroke="#d0d0d0"/><path d="M2 4.5 H7" stroke="#000"/><path d="M4.5 2 V7" stroke="#000"/></svg>
<svg style="left:101px;top:312px;" width="16" height="16" viewBox="0 0 16 16"><path d="M1.5 4 V13.5 H14.5 V5.5 H8 L6.5 3.5 H2.5 Z" fill="#f7df7a" stroke="#b88a1a"/><path d="M1.5 6.5 H14.5" stroke="#fff6c0"/><path d="M2 13 H14" stroke="#d8a830"/></svg>
<div class="t" style="left:122.10000000000001px;top:315.59px;font-size:11px;color:#000;font-weight:normal;font-style:normal;font-family:'Liberation Sans';letter-spacing:-0.578px;">SystemGVLs</div>
<svg style="left:86px;top:334px;" width="9" height="9" viewBox="0 0 9 9"><rect x="0.5" y="0.5" width="8" height="8" rx="1" fill="#f6f6f6" stroke="#a8c8c8"/><path d="M1 7.5 H8" stroke="#d0d0d0"/><path d="M2 4.5 H7" stroke="#000"/><path d="M4.5 2 V7" stroke="#000"/></svg>
<svg style="left:101px;top:331px;" width="16" height="16" viewBox="0 0 16 16"><path d="M1.5 4 V13.5 H14.5 V5.5 H8 L6.5 3.5 H2.5 Z" fill="#f7df7a" stroke="#b88a1a"/><path d="M1.5 6.5 H14.5" stroke="#fff6c0"/><path d="M2 13 H14" stroke="#d8a830"/></svg>
<div class="t" style="left:122.10000000000001px;top:334.59px;font-size:11px;color:#000;font-weight:normal;font-style:normal;font-family:'Liberation Sans';letter-spacing:-0.422px;">SystemPOUs</div>
<svg style="left:86px;top:353px;" width="9" height="9" viewBox="0 0 9 9"><rect x="0.5" y="0.5" width="8" height="8" rx="1" fill="#f6f6f6" stroke="#a8c8c8"/><path d="M1 7.5 H8" stroke="#d0d0d0"/><path d="M2 4.5 H7" stroke="#000"/></svg>
<svg style="left:101px;top:350px;" width="16" height="16" viewBox="0 0 16 16"><path d="M1.5 4 V13.5 H14.5 V5.5 H8 L6.5 3.5 H2.5 Z" fill="#f7df7a" stroke="#b88a1a"/><path d="M1.5 6.5 H14.5" stroke="#fff6c0"/><path d="M2 13 H14" stroke="#d8a830"/></svg>
<div class="t" style="left:122.10000000000001px;top:353.59px;font-size:11px;color:#000;font-weight:normal;font-style:normal;font-family:'Liberation Sans';letter-spacing:-0.757px;">UserGVLs</div>
<svg style="left:121px;top:369px;" width="16" height="16" viewBox="0 0 16 16"><defs><radialGradient id="gg" cx="0.45" cy="0.3" r="0.75"><stop offset="0" stop-color="#40c8ff"/><stop offset="0.55" stop-color="#1a6ee8"/><stop offset="1" stop-color="#0a2a98"/></radialGradient></defs><circle cx="7.8" cy="8.2" r="7" fill="url(#gg)"/><path d="M2.5 5.5 Q5 2 9 2.2 Q10 3.5 8.5 5 Q6 6.5 4 7.5 Q2.5 7.5 2.5 5.5 Z" fill="#30b030"/><path d="M10.5 4 Q13.5 5 14.2 8 Q13.5 11 11.5 10.5 Q10 8 10.5 4 Z" fill="#108a20"/><path d="M6.5 9.5 Q8.5 9 8.8 11 Q8 13 6.8 12.5 Z" fill="#10902a"/><ellipse cx="8" cy="8" rx="8.2" ry="3.2" transform="rotate(-45 8 8)" fill="none" stroke="#c8f4ff" stroke-width="1.1" stroke-dasharray="20 6 40"/></svg>
<div class="t" style="left:142.1px;top:372.59px;font-size:11px;color:#000;font-weight:normal;font-style:normal;font-family:'Liberation Sans';letter-spacing:-0.3px;">Disables</div>
<svg style="left:121px;top:388px;" width="16" height="16" viewBox="0 0 16 16"><defs><radialGradient id="gg" cx="0.45" cy="0.3" r="0.75"><stop offset="0" stop-color="#40c8ff"/><stop offset="0.55" stop-color="#1a6ee8"/><stop offset="1" stop-color="#0a2a98"/></radialGradient></defs><circle cx="7.8" cy="8.2" r="7" fill="url(#gg)"/><path d="M2.5 5.5 Q5 2 9 2.2 Q10 3.5 8.5 5 Q6 6.5 4 7.5 Q2.5 7.5 2.5 5.5 Z" fill="#30b030"/><path d="M10.5 4 Q13.5 5 14.2 8 Q13.5 11 11.5 10.5 Q10 8 10.5 4 Z" fill="#108a20"/><path d="M6.5 9.5 Q8.5 9 8.8 11 Q8 13 6.8 12.5 Z" fill="#10902a"/><ellipse cx="8" cy="8" rx="8.2" ry="3.2" transform="rotate(-45 8 8)" fill="none" stroke="#c8f4ff" stroke-width="1.1" stroke-dasharray="20 6 40"/></svg>
<div class="t" style="left:142.1px;top:391.59px;font-size:11px;color:#000;font-weight:normal;font-style:normal;font-family:'Liberation Sans';letter-spacing:-0.325px;">Qualities</div>
<svg style="left:121px;top:407px;" width="16" height="16" viewBox="0 0 16 16"><defs><radialGradient id="gg" cx="0.45" cy="0.3" r="0.75"><stop offset="0" stop-color="#40c8ff"/><stop offset="0.55" stop-color="#1a6ee8"/><stop offset="1" stop-color="#0a2a98"/></radialGradient></defs><circle cx="7.8" cy="8.2" r="7" fill="url(#gg)"/><path d="M2.5 5.5 Q5 2 9 2.2 Q10 3.5 8.5 5 Q6 6.5 4 7.5 Q2.5 7.5 2.5 5.5 Z" fill="#30b030"/><path d="M10.5 4 Q13.5 5 14.2 8 Q13.5 11 11.5 10.5 Q10 8 10.5 4 Z" fill="#108a20"/><path d="M6.5 9.5 Q8.5 9 8.8 11 Q8 13 6.8 12.5 Z" fill="#10902a"/><ellipse cx="8" cy="8" rx="8.2" ry="3.2" transform="rotate(-45 8 8)" fill="none" stroke="#c8f4ff" stroke-width="1.1" stroke-dasharray="20 6 40"/></svg>
<div class="t" style="left:142.1px;top:410.59px;font-size:11px;color:#000;font-weight:normal;font-style:normal;font-family:'Liberation Sans';letter-spacing:-0.238px;">ReqDiagnostics</div>
<svg style="left:86px;top:429px;" width="9" height="9" viewBox="0 0 9 9"><rect x="0.5" y="0.5" width="8" height="8" rx="1" fill="#f6f6f6" stroke="#a8c8c8"/><path d="M1 7.5 H8" stroke="#d0d0d0"/><path d="M2 4.5 H7" stroke="#000"/><path d="M4.5 2 V7" stroke="#000"/></svg>
<svg style="left:101px;top:426px;" width="16" height="16" viewBox="0 0 16 16"><path d="M1.5 4 V13.5 H14.5 V5.5 H8 L6.5 3.5 H2.5 Z" fill="#f7df7a" stroke="#b88a1a"/><path d="M1.5 6.5 H14.5" stroke="#fff6c0"/><path d="M2 13 H14" stroke="#d8a830"/></svg>
<div class="t" style="left:122.10000000000001px;top:429.59px;font-size:11px;color:#000;font-weight:normal;font-style:normal;font-family:'Liberation Sans';letter-spacing:-0.443px;">UserPOUs</div>
<svg style="left:101px;top:445px;" width="16" height="16" viewBox="0 0 16 16"><path d="M1 5 L4 2 H7 V14 L4 15.5 H1 Z" fill="#20d8e8" stroke="#111" stroke-width="0.8"/><path d="M1 5 H4 V15.5" fill="none" stroke="#111" stroke-width="0.7"/><rect x="4.5" y="4.5" width="4" height="11" fill="#e01818" stroke="#111" stroke-width="0.8"/><path d="M9 5 L11.5 2.5 H14.5 V13 L12 15.5 H9 Z" fill="#f8e818" stroke="#111" stroke-width="0.8"/><path d="M9 5 H12 V15.5 M12 5 L14.5 2.5" fill="none" stroke="#111" stroke-width="0.7"/></svg>
<div class="t" style="left:122.10000000000001px;top:448.59px;font-size:11px;color:#000;font-weight:normal;font-style:normal;font-family:'Liberation Sans';letter-spacing:-0.136px;">Library Manager</div>
<svg style="left:86px;top:467px;" width="9" height="9" viewBox="0 0 9 9"><rect x="0.5" y="0.5" width="8" height="8" rx="1" fill="#f6f6f6" stroke="#a8c8c8"/><path d="M1 7.5 H8" stroke="#d0d0d0"/><path d="M2 4.5 H7" stroke="#000"/></svg>
<svg style="left:101px;top:464px;" width="16" height="16" viewBox="0 0 16 16"><rect x="0.5" y="2.5" width="14" height="12" fill="#c8c8c8" stroke="#333"/><path d="M5 2.5 V14.5 M9.5 2.5 V14.5" stroke="#555"/><path d="M0.5 2.5 L2 1 H15.5 V13 L14.5 14.5" fill="#ddd" stroke="#333" stroke-width="0.7"/><rect x="1.8" y="4" width="1.6" height="1.3" fill="#0c0"/><rect x="6.3" y="4" width="1.6" height="1.3" fill="#c00"/><rect x="10.8" y="4" width="1.6" height="1.3" fill="#c00"/><circle cx="10" cy="11" r="3.3" fill="#f8e020" stroke="#6a5a00" stroke-width="0.7" stroke-dasharray="1.4 0.7"/><circle cx="10" cy="11" r="2.6" fill="#f8e020"/><circle cx="10" cy="11" r="1" fill="#a08000"/></svg>
<div class="t" style="left:122.10000000000001px;top:467.59px;font-size:11px;color:#000;font-weight:normal;font-style:normal;font-family:'Liberation Sans';letter-spacing:-0.059px;">Task Configuration</div>
<svg style="left:106px;top:486px;" width="9" height="9" viewBox="0 0 9 9"><rect x="0.5" y="0.5" width="8" height="8" rx="1" fill="#f6f6f6" stroke="#a8c8c8"/><path d="M1 7.5 H8" stroke="#d0d0d0"/><path d="M2 4.5 H7" stroke="#000"/></svg>
<svg style="left:121px;top:483px;" width="16" height="16" viewBox="0 0 16 16"><path d="M1 9 L8 5.5 L15 9 L8 12.5 Z" fill="#fff" stroke="#333"/><path d="M1 11 L8 14.5 L15 11" fill="none" stroke="#333"/><path d="M1 7 L8 3.5 L15 7" fill="none" stroke="#333"/><path d="M8 0.5 V7 M5.5 4.5 L8 7.5 L10.5 4.5" stroke="#1040c0" stroke-width="1.6" fill="none"/></svg>
<div class="t" style="left:142.1px;top:486.59px;font-size:11px;color:#000;font-weight:normal;font-style:normal;font-family:'Liberation Sans';letter-spacing:-0.129px;">MainTask</div>
<svg style="left:141px;top:502px;" width="16" height="16" viewBox="0 0 16 16"><path d="M1.5 0.5 H10 L13.5 4 V15.5 H1.5 Z" fill="#fff" stroke="#222"/><path d="M10 0.5 V4 H13.5" fill="none" stroke="#222" stroke-width="0.7"/><path d="M2.5 15 H13" stroke="#bbb"/><rect x="6.5" y="3.5" width="4" height="4" fill="none" stroke="#c00" stroke-width="1.1"/><rect x="2.5" y="7.5" width="4" height="4" fill="none" stroke="#080" stroke-width="1.1"/><rect x="6.5" y="7.5" width="4" height="4" fill="none" stroke="#20a" stroke-width="1.1"/><path d="M11 6 H13 M11 8 H13 M11 10 H13" stroke="#666" stroke-width="0.7"/></svg>
<div class="t" style="left:162.1px;top:505.59px;font-size:11px;color:#000;font-weight:normal;font-style:normal;font-family:'Liberation Sans';letter-spacing:-0.183px;">MainPrg</div>
<svg style="left:46px;top:524px;" width="9" height="9" viewBox="0 0 9 9"><rect x="0.5" y="0.5" width="8" height="8" rx="1" fill="#f6f6f6" stroke="#a8c8c8"/><path d="M1 7.5 H8" stroke="#d0d0d0"/><path d="M2 4.5 H7" stroke="#000"/></svg>
<svg style="left:61px;top:521px;" width="16" height="16" viewBox="0 0 16 16"><path d="M2.5 4 L5 1.5 H13.5 V12 L11 14.5 H2.5 Z" fill="#c8c8c8" stroke="#333"/><path d="M2.5 4 H11 V14.5 M11 4 L13.5 1.5 M7 4 V14.5" fill="none" stroke="#333"/><rect x="4" y="6" width="2" height="1.5" fill="#0c0"/><rect x="8.5" y="6" width="2" height="1.5" fill="#c00"/></svg>
<div class="t" style="left:82.10000000000001px;top:524.59px;font-size:11px;color:#000;font-weight:normal;font-style:normal;font-family:'Liberation Sans';letter-spacing:-0.342px;">CPU (XF325-W)</div>
<svg style="left:81px;top:540px;" width="16" height="16" viewBox="0 0 16 16"><path d="M3 2 L6 2 L10 9" stroke="#1030b0" stroke-width="2" fill="none"/><path d="M6 9 H13 L11.5 14 H7.5 Z" fill="#333"/><path d="M8 11 H11" stroke="#ccc"/></svg>
<div class="t" style="left:102.10000000000001px;top:543.59px;font-size:11px;color:#000;font-weight:normal;font-style:normal;font-family:'Liberation Sans';letter-spacing:-0.3px;">COM 1</div>
<svg style="left:81px;top:559px;" width="16" height="16" viewBox="0 0 16 16"><path d="M3 2 L6 2 L10 9" stroke="#1030b0" stroke-width="2" fill="none"/><path d="M6 9 H13 L11.5 14 H7.5 Z" fill="#333"/><path d="M8 11 H11" stroke="#ccc"/></svg>
<div class="t" style="left:102.10000000000001px;top:562.59px;font-size:11px;color:#000;font-weight:normal;font-style:normal;font-family:'Liberation Sans';letter-spacing:-0.275px;">NET 1</div>
<svg style="left:81px;top:578px;" width="16" height="16" viewBox="0 0 16 16"><path d="M3 2 L6 2 L10 9" stroke="#1030b0" stroke-width="2" fill="none"/><path d="M6 9 H13 L11.5 14 H7.5 Z" fill="#333"/><path d="M8 11 H11" stroke="#ccc"/></svg>
<div class="t" style="left:102.10000000000001px;top:581.59px;font-size:11px;color:#000;font-weight:normal;font-style:normal;font-family:'Liberation Sans';letter-spacing:-0.275px;">NET 2</div>
<svg style="left:81px;top:597px;" width="16" height="16" viewBox="0 0 16 16"><path d="M3 2 L6 2 L10 9" stroke="#1030b0" stroke-width="2" fill="none"/><path d="M6 9 H13 L11.5 14 H7.5 Z" fill="#333"/><path d="M8 11 H11" stroke="#ccc"/></svg>
<div class="t" style="left:102.10000000000001px;top:600.59px;font-size:11px;color:#000;font-weight:normal;font-style:normal;font-family:'Liberation Sans';letter-spacing:-0.8px;">CAN</div>
<svg style="left:81px;top:616px;" width="16" height="16" viewBox="0 0 16 16"><path d="M3 2 L6 2 L10 9" stroke="#1030b0" stroke-width="2" fill="none"/><path d="M6 9 H13 L11.5 14 H7.5 Z" fill="#333"/><path d="M8 11 H11" stroke="#ccc"/></svg>
<div class="t" style="left:102.10000000000001px;top:619.59px;font-size:11px;color:#000;font-weight:normal;font-style:normal;font-family:'Liberation Sans';letter-spacing:-1.05px;">BUS</div>
<div style="left:274px;top:121px;width:1px;height:694px;background:#6d6d6d"></div>
<div style="left:83px;top:346px;width:159px;height:23px;border:3.5px solid #ff0000;border-radius:3px"></div>
<div style="left:279px;top:97px;width:1299px;height:21px;background:#f0f0f0;border:1px solid #9a9a9a;border-bottom:none"></div>
<div style="left:279px;top:117px;width:1299px;height:1px;background:#d6d6d6"></div>
<svg style="left:1562px;top:106px;" width="12" height="7" viewBox="0 0 12 7"><path d="M0.5 0.5 H10.5 L5.5 5.5 Z" fill="#000"/></svg>
<div style="left:279px;top:118px;width:1299px;height:162px;background:#fff;border-left:1px solid #9a9a9a;border-right:1px solid #9a9a9a"></div>
<div style="left:279px;top:279px;width:1299px;height:1px;background:#9a9a9a"></div>
<div style="left:280px;top:280px;width:1297px;height:4px;background:#efefef"></div>
<div style="left:279px;top:284px;width:1299px;height:1px;background:#9a9a9a"></div>
<svg style="left:915px;top:279px;" width="27" height="6" viewBox="0 0 27 6"><path d="M1.5 5.5 L5.5 0.8 L9.5 5.5 Z" fill="#a0a0a0" stroke="#6a6a6a" stroke-width="0.8"/><path d="M17.5 0.8 H25.5 L21.5 5.5 Z" fill="#a0a0a0" stroke="#6a6a6a" stroke-width="0.8"/></svg>
<div style="left:279px;top:285px;width:1299px;height:571px;background:#fff;border-left:1px solid #9a9a9a;border-right:1px solid #9a9a9a;border-bottom:1px solid #808080"></div>
<svg style="left:279px;top:98px;" width="114" height="20" viewBox="0 0 114 20"><path d="M3 19.5 L20 2.5 Q21 1.5 23 1.5 H109.5 Q111.5 1.5 111.5 4 V19.5" fill="#fff" stroke="#9a9a9a"/></svg>
<div style="left:280px;top:117px;width:111px;height:1px;background:#fff"></div>
<svg style="left:300px;top:100px;" width="14" height="17" viewBox="0 0 14 17"><path d="M0.5 0.5 H8.5 L12.5 4.5 V16.5 H0.5 Z" fill="#f2f2f2" stroke="#222"/><path d="M0 8.5 H2.5 M7.5 8.5 H10.5" stroke="#00f" stroke-width="1.4"/><rect x="2.5" y="5" width="2" height="7.5" fill="#00f"/><rect x="6" y="5" width="2" height="7.5" fill="#00f"/></svg>
<div class="t" style="left:321.3px;top:104.43px;font-size:11.3px;color:#000;font-weight:bold;font-style:normal;font-family:'Liberation Sans';letter-spacing:0.367px;">UserPrg</div>
<svg style="left:376px;top:105px;" width="11" height="10" viewBox="0 0 11 10"><path d="M1.5 1.5 L9 9 M9 1.5 L1.5 9" stroke="#000" stroke-width="2.2"/></svg>
<svg style="left:391px;top:98px;" width="144" height="20" viewBox="0 0 144 20"><path d="M1.5 19.5 V5 Q1.5 1.5 5 1.5 H138 Q142.5 1.5 142.5 5 V19.5" fill="#f6f6f6" stroke="#a8a8a8"/></svg>
<svg style="left:397px;top:100px;" width="14" height="17" viewBox="0 0 14 17"><path d="M0.5 0.5 H8.5 L12.5 4.5 V16.5 H0.5 Z" fill="#f2f2f2" stroke="#222"/><path d="M0 8.5 H2.5 M7.5 8.5 H10.5" stroke="#00f" stroke-width="1.4"/><rect x="2.5" y="5" width="2" height="7.5" fill="#00f"/><rect x="6" y="5" width="2" height="7.5" fill="#00f"/></svg>
<div class="t" style="left:422px;top:104.49px;font-size:11px;color:#000;font-weight:normal;font-style:normal;font-family:'Liberation Sans';letter-spacing:-0.231px;">FUN_DOLStarter</div>
<div style="left:280px;top:118px;width:1297px;height:2px;background:#ececec"></div>
<div style="left:332px;top:120px;width:2px;height:159px;background:#d0d0d0"></div>
<div class="t" style="left:321.6px;top:121.97px;font-size:14px;color:#3a8bc8;font-weight:normal;font-style:normal;font-family:'Liberation Mono';width:9px;text-align:right;">1</div>
<div class="t" style="left:321.6px;top:141.97px;font-size:14px;color:#3a8bc8;font-weight:normal;font-style:normal;font-family:'Liberation Mono';width:9px;text-align:right;">2</div>
<div class="t" style="left:321.6px;top:161.97px;font-size:14px;color:#c8201e;font-weight:normal;font-style:normal;font-family:'Liberation Mono';width:9px;text-align:right;">3</div>
<div class="t" style="left:321.6px;top:181.97px;font-size:14px;color:#3a8bc8;font-weight:normal;font-style:normal;font-family:'Liberation Mono';width:9px;text-align:right;">4</div>
<div class="t" style="left:321.6px;top:201.97px;font-size:14px;color:#3a8bc8;font-weight:normal;font-style:normal;font-family:'Liberation Mono';width:9px;text-align:right;">5</div>
<div class="t" style="left:321.6px;top:221.97px;font-size:14px;color:#3a8bc8;font-weight:normal;font-style:normal;font-family:'Liberation Mono';width:9px;text-align:right;">6</div>
<div class="t" style="left:321.6px;top:241.97px;font-size:14px;color:#3a8bc8;font-weight:normal;font-style:normal;font-family:'Liberation Mono';width:9px;text-align:right;">7</div>
<svg style="left:282px;top:165px;" width="12" height="12" viewBox="0 0 12 12"><rect x="0.5" y="0.5" width="10" height="10" fill="#fff" stroke="#3a78b8"/><path d="M0.5 5.5 H10.5" stroke="#3a78b8"/></svg>
<div class="t" style="left:361.70000000000005px;top:122.88px;font-size:13.6px;color:#000;font-weight:normal;font-style:normal;font-family:'Liberation Mono';letter-spacing:1.85px;"><span style="color:#008282;font-style:italic">(*The main code inserted by the user and executed associated with the MainTask must be inserted into this POU.*)</span></div>
<div class="t" style="left:360.1px;top:142.93px;font-size:13.6px;color:#000;font-weight:normal;font-style:normal;font-family:'Liberation Mono';letter-spacing:1.85px;"><b style="color:#0000d8">PROGRAM</b> UserPrg</div>
<div class="t" style="left:360.1px;top:162.98px;font-size:13.6px;color:#000;font-weight:normal;font-style:normal;font-family:'Liberation Mono';letter-spacing:1.85px;"><b style="color:#0000d8">VAR</b></div>
<div class="t" style="left:360.1px;top:183.03px;font-size:13.6px;color:#000;font-weight:normal;font-style:normal;font-family:'Liberation Mono';letter-spacing:1.85px;">    Input_00: <b style="color:#0000d8">BOOL</b><span style="color:#0000d8">;</span></div>
<div class="t" style="left:360.1px;top:203.08px;font-size:13.6px;color:#000;font-weight:normal;font-style:normal;font-family:'Liberation Mono';letter-spacing:1.85px;">    Output_00: <b style="color:#0000d8">BOOL</b><span style="color:#0000d8">;</span></div>
<div class="t" style="left:360.1px;top:223.13px;font-size:13.6px;color:#000;font-weight:normal;font-style:normal;font-family:'Liberation Mono';letter-spacing:1.85px;">    FB_DOLStarter_0: FB_DOLStarter<span style="color:#0000d8">;</span></div>
<div class="t" style="left:360.1px;top:243.18px;font-size:13.6px;color:#000;font-weight:normal;font-style:normal;font-family:'Liberation Mono';letter-spacing:1.85px;"><b style="color:#0000d8">END_VAR</b></div>
<div style="left:1537px;top:120px;width:40px;height:159px;background:#f0f0f0"></div>
<div style="left:1544px;top:137px;width:2px;height:108px;background:#8c8c8c"></div>
<div style="left:1553px;top:120px;width:24px;height:159px;background:linear-gradient(to right,#fdfdfb,#c8c8b4)"></div>
<div style="left:1576px;top:120px;width:1px;height:159px;background:#8a8aa0"></div>
<svg style="left:1553px;top:121px;" width="21" height="20" viewBox="0 0 21 20"><rect x="0.5" y="0.5" width="20" height="19" fill="#e6e6f0" stroke="#3c78e0"/><path d="M4 4.5 H8 M5 6.5 H14 M5 8.5 H12 M5 10.5 H14" stroke="#000" stroke-width="1"/><path d="M5 12.5 H15" stroke="#2a9a2a"/><path d="M5 14.5 H13" stroke="#000"/><path d="M4 16.5 H12" stroke="#00f"/><path d="M4 4.5 H8" stroke="#00f"/></svg>
<svg style="left:1555px;top:146px;" width="16" height="14" viewBox="0 0 16 14"><rect x="1" y="1" width="14" height="12" fill="#fff" stroke="#000"/><rect x="1" y="1" width="14" height="2" fill="#00f"/><path d="M1 6.5 H15 M1 9.5 H15 M5.5 3 V13 M10.5 3 V13" stroke="#999"/></svg>
<div style="left:1468px;top:259px;width:48px;height:20px;background:#efefef;border:1px solid #b4b4b4;border-bottom:none"></div>
<div class="t" style="left:1482.8px;top:266.04px;font-size:10px;color:#000;font-weight:normal;font-style:normal;font-family:'Liberation Sans';letter-spacing:-0.4px;">130</div>
<div style="left:1516px;top:259px;width:20px;height:20px;background:#efefef;border:1px solid #b4b4b4;border-bottom:none"></div>
<svg style="left:1518px;top:261px;" width="18" height="18" viewBox="0 0 18 18"><path d="M2 5.8 H9.6 V15.5 H2 Z" fill="#fff" stroke="#000" stroke-width="1.1"/><rect x="3" y="12" width="5.5" height="2.5" fill="#c8c8c8"/><circle cx="9" cy="6.6" r="4.6" fill="rgba(220,220,220,0.55)" stroke="#000" stroke-width="1.2" /><path d="M5 6.2 H11.2 M5.5 8.2 H11.2" stroke="#000" stroke-width="1"/><path d="M5 6.2 H8 M5.5 7.4 L7 8.6" stroke="#00e8f0" stroke-width="1.1"/><path d="M12.2 10.2 L16.6 14.4" stroke="#000" stroke-width="2.3" stroke-linecap="round"/></svg>
<div style="left:340px;top:285px;width:1237px;height:137px;background:#fffddf"></div>
<div style="left:280px;top:422px;width:1297px;height:1px;background:#c8c8c8"></div>
<div style="left:280px;top:285px;width:60px;height:137px;background:#f2f2f2"></div>
<div style="left:282px;top:287px;width:39px;height:135px;background:#f8e2e8;border:1px dotted #555;border-bottom:none"></div>
<div class="t" style="left:315px;top:287.33px;font-size:10px;color:#008080;font-weight:normal;font-style:normal;font-family:'Liberation Mono';">1</div>
<div style="left:323px;top:285px;width:2px;height:137px;background:#008080"></div>
<div style="left:350px;top:285px;width:1px;height:137px;background:#000"></div>
<div style="left:367px;top:318px;width:65px;height:16px;background:#d2d2d2"></div>
<div class="t" style="left:386.5px;top:336.57px;font-size:11px;color:#a08a00;font-weight:normal;font-style:normal;font-family:'Liberation Mono';letter-spacing:-0.4px">TRUE</div>
<div style="left:350px;top:357px;width:42px;height:1px;background:#000"></div>
<div style="left:392px;top:350px;width:3px;height:15px;background:#dce6f8;border:1px solid #3a5aa0"></div>
<div style="left:404px;top:350px;width:3px;height:15px;background:#dce6f8;border:1px solid #3a5aa0"></div>
<div style="left:407px;top:357px;width:49px;height:1px;background:#000"></div>
<div style="left:455px;top:334px;width:118px;height:40px;background:#dde6f6;border:1px solid #3c5ca8"></div>
<div class="t" style="left:467.5px;top:339.99px;font-size:11.1px;color:#000;font-weight:bold;font-style:normal;font-family:'Liberation Mono';">FUN_DOLStarter</div>
<div class="t" style="left:458px;top:353.49px;font-size:11.1px;color:#000;font-weight:normal;font-style:normal;font-family:'Liberation Mono';">EN</div>
<div class="t" style="left:550px;top:353.49px;font-size:11.1px;color:#000;font-weight:normal;font-style:normal;font-family:'Liberation Mono';">ENO</div>
<div style="left:573px;top:357px;width:8px;height:1px;background:#000"></div>
<div style="left:581px;top:350px;width:17px;height:15px;border:1px solid #dcdce8;background:#fffef0"></div>
<div style="left:280px;top:839px;width:1297px;height:16px;background:#f0f0f0"></div>
<svg style="left:285px;top:843px;" width="7" height="9" viewBox="0 0 7 9"><path d="M6.5 0.5 V8.5 L0.5 4.5 Z" fill="#858585"/></svg>
<div style="left:297px;top:844px;width:55px;height:6px;background:#858585;border-radius:3px"></div>
<svg style="left:1566px;top:843px;" width="7" height="9" viewBox="0 0 7 9"><path d="M0.5 0.5 V8.5 L6.5 4.5 Z" fill="#858585"/></svg>
<div style="left:1432px;top:818px;width:20px;height:20px;background:#fff;border:1px solid #b0b0b0"></div>
<svg style="left:1436px;top:821px;" width="12" height="15" viewBox="0 0 12 15"><path d="M2 1 L2 12 L4.5 9.5 L7 14 L8.5 13 L6.5 8.5 L10 8.5 Z" fill="#000"/></svg>
<div style="left:1452px;top:818px;width:20px;height:20px;background:#f0f0f0;border:1px solid #b0b0b0"></div>
<svg style="left:1454px;top:820px;" width="16" height="16" viewBox="0 0 16 16"><path d="M8 1.5 V14.5 M1.5 8 H14.5" stroke="#000" stroke-width="1.2"/><path d="M6.5 3 L8 1 L9.5 3 Z M6.5 13 L8 15 L9.5 13 Z M3 6.5 L1 8 L3 9.5 Z M13 6.5 L15 8 L13 9.5 Z" fill="#000"/></svg>
<div style="left:1472px;top:818px;width:20px;height:20px;background:#f0f0f0;border:1px solid #b0b0b0"></div>
<svg style="left:1474px;top:820px;" width="16" height="17" viewBox="0 0 16 17"><circle cx="6.5" cy="6.5" r="4.8" fill="#d8e8f8" stroke="#7890b0" stroke-width="1.3"/><circle cx="5.5" cy="5" r="1.5" fill="#fff"/><path d="M10 10 L14.5 14.5" stroke="#c0a040" stroke-width="2.2"/></svg>
<div style="left:1512px;top:818px;width:45px;height:20px;background:#efefef;border:1px solid #b4b4b4"></div>
<div class="t" style="left:1520.5px;top:823.57px;font-size:11.5px;color:#000;font-weight:normal;font-style:normal;font-family:'Liberation Sans';letter-spacing:-0.1px;">90 %</div>
<div style="left:1557px;top:818px;width:21px;height:20px;background:#efefef;border:1px solid #b4b4b4"></div>
<svg style="left:1558px;top:819px;" width="18" height="18" viewBox="0 0 18 18"><path d="M2 5.8 H9.6 V15.5 H2 Z" fill="#fff" stroke="#000" stroke-width="1.1"/><rect x="3" y="12" width="5.5" height="2.5" fill="#c8c8c8"/><circle cx="9" cy="6.6" r="4.6" fill="rgba(220,220,220,0.55)" stroke="#000" stroke-width="1.2" /><path d="M5 6.2 H11.2 M5.5 8.2 H11.2" stroke="#000" stroke-width="1"/><path d="M5 6.2 H8 M5.5 7.4 L7 8.6" stroke="#00e8f0" stroke-width="1.1"/><path d="M12.2 10.2 L16.6 14.4" stroke="#000" stroke-width="2.3" stroke-linecap="round"/></svg>
<div style="left:1580px;top:99px;width:22px;height:71px;background:#fbfbfb;border:1px solid #a0a0a0;border-right:none;border-radius:4px 0 0 4px"></div>
<svg style="left:1582px;top:101px;" width="16" height="17" viewBox="0 0 16 17"><path d="M1.5 2 L13 14" stroke="#a02020" stroke-width="1.6"/><path d="M2 1 L4 3" stroke="#555" stroke-width="2"/><path d="M12 2 Q9 3 10 6 L3 14" stroke="#333" stroke-width="1.5" fill="none"/><path d="M10 2 H14 V5" stroke="#333" fill="none"/><path d="M9 11 L13 10 L16 13 L12 16 Z" fill="#b0a030" stroke="#6a6010" stroke-width="0.6"/></svg>
<div class="t" style="left:1595.5px;top:125px;font-size:11px;color:#4a4a4a;transform-origin:0 0;transform:rotate(90deg);font-family:'Liberation Sans'">ToolBox</div>
<div style="left:1580px;top:183px;width:22px;height:98px;background:#fbfbfb;border:1px solid #a0a0a0;border-right:none;border-radius:4px 0 0 4px"></div>
<svg style="left:1582px;top:185px;" width="17" height="17" viewBox="0 0 17 17"><path d="M2 6 L8 1 L15 9 L9 15 Z" fill="#3a5aa8" stroke="#1a3070" stroke-width="0.8"/><path d="M3 6 L8 2 L11 5 L5 9 Z" fill="#7a9ad8"/><circle cx="14" cy="13" r="2" fill="#e02020"/></svg>
<div class="t" style="left:1595.5px;top:207px;font-size:11px;color:#4a4a4a;transform-origin:0 0;transform:rotate(90deg);font-family:'Liberation Sans'">I/O Simulator</div>
<div style="left:0px;top:856px;width:1599px;height:22px;background:linear-gradient(to right,#f6f6f6,#fbfbfb)"></div>
<div style="left:0px;top:878px;width:1599px;height:1px;background:#dcdcdc"></div>
<div style="left:0px;top:879px;width:1599px;height:20px;background:#f0f0f0"></div>
<div style="left:2px;top:858px;width:318px;height:21px;background:#f0f0f0;border:1px solid #a0a0a0;border-bottom:none;border-radius:3px 3px 0 0"></div>
<div class="t" style="left:27px;top:862.77px;font-size:11.5px;color:#555;font-weight:normal;font-style:normal;font-family:'Liberation Sans';letter-spacing:0px;">Messages - Total 0 error(s), 1 warning(s), 60 message(s)</div>
<div style="left:952px;top:881px;width:1px;height:18px;background:#d0d0d0"></div>
<div class="t" style="left:983.3px;top:883.93px;font-size:11.3px;color:#000;font-weight:normal;font-style:normal;font-family:'Liberation Sans';letter-spacing:-0.15px;">Last build:</div>
<svg style="left:1040px;top:882px;" width="12" height="12" viewBox="0 0 12 12"><circle cx="6" cy="6" r="5.5" fill="#e02020" stroke="#901010" stroke-width="0.6"/><path d="M3.8 3.8 L8.2 8.2 M8.2 3.8 L3.8 8.2" stroke="#fff" stroke-width="1.6"/></svg>
<div class="t" style="left:1057px;top:883.93px;font-size:11.3px;color:#000;font-weight:normal;font-style:normal;font-family:'Liberation Sans';">0</div>
<svg style="left:1069px;top:882px;" width="12" height="12" viewBox="0 0 12 12"><circle cx="6" cy="6" r="5.5" fill="#f0e020" stroke="#8a8010" stroke-width="0.6"/><path d="M6 3 V7" stroke="#000" stroke-width="1.5"/><circle cx="6" cy="9" r="0.9" fill="#000"/></svg>
<div class="t" style="left:1086.5px;top:883.93px;font-size:11.3px;color:#000;font-weight:bold;font-style:normal;font-family:'Liberation Sans';">1</div>
<div class="t" style="left:1114.8px;top:883.93px;font-size:11.3px;color:#000;font-weight:normal;font-style:normal;font-family:'Liberation Sans';letter-spacing:-0.5px;">Precompile</div>
<svg style="left:1171px;top:882px;" width="16" height="16" viewBox="0 0 16 16"><path d="M1.5 8 L6 13 L14.5 3" fill="none" stroke="#20a030" stroke-width="2.4"/></svg>
<div style="left:1214px;top:881px;width:1px;height:18px;background:#d0d0d0"></div>
<div style="left:1218px;top:881px;width:76px;height:18px;background:#ff0000"></div>
<div class="t" style="left:1222.4px;top:884.93px;font-size:11.3px;color:#400000;font-weight:normal;font-style:normal;font-family:'Liberation Sans';letter-spacing:-0.11px;">SIMULATION</div>
<svg style="left:1298px;top:882px;" width="18" height="17" viewBox="0 0 18 17"><circle cx="6" cy="6" r="4" fill="none" stroke="#8a8cc0" stroke-width="2.4"/><circle cx="14" cy="3" r="2.3" fill="#10c010"/><rect x="8.5" y="7.5" width="8" height="9" fill="#20d020" stroke="#106010"/><path d="M10 10.5 H15 M10 13.5 H15" stroke="#106010"/></svg>
<div style="left:1318px;top:881px;width:1px;height:18px;background:#d0d0d0"></div>
<div class="t" style="left:1382.4px;top:883.60px;font-size:11.7px;color:#000;font-weight:normal;font-style:normal;font-family:'Liberation Sans';letter-spacing:0.07px;">Project user: (nobody)</div>
<div style="left:1558px;top:881px;width:1px;height:18px;background:#d0d0d0"></div>
<svg style="left:1563px;top:881px;" width="14" height="17" viewBox="0 0 14 17"><path d="M7 1 L13 3 V9 Q13 14 7 16 Q1 14 1 9 V3 Z" fill="#8a8a8a" stroke="#555" stroke-width="0.7"/><path d="M7 2 V15 Q12 13 12 9 V8 H2 V9 Q2 13 7 15" fill="#f0d840"/><path d="M7 2 L12 3.5 V8 H7 Z M2 8 H7 V15 Q2 13 2 9 Z" fill="#e8e8e8"/></svg>
<div style="left:1582px;top:881px;width:1px;height:18px;background:#d0d0d0"></div>
<svg style="left:3px;top:836px;" width="17" height="17" viewBox="0 0 17 17"><ellipse cx="8" cy="3.5" rx="6" ry="2.5" fill="#c8c8c8" stroke="#666" stroke-width="0.7"/><ellipse cx="8" cy="7" rx="6" ry="2.5" fill="#b0b0b0" stroke="#666" stroke-width="0.7"/><path d="M8 9 V13 M2 13 H14" stroke="#444" stroke-width="1.2"/><rect x="6" y="11" width="4" height="4" fill="#f0d020" stroke="#806000" stroke-width="0.6"/><rect x="1" y="12" width="3" height="3" fill="#444"/><rect x="12" y="12" width="3" height="3" fill="#444"/></svg>
<svg style="left:69px;top:835px;" width="14" height="18" viewBox="0 0 14 18"><path d="M0.5 3.5 H8 L12.5 8 V17.5 H0.5 Z" fill="#e8f0ff" stroke="#6a8ac0"/><path d="M3.5 0.5 H10 L13.5 4 V14" fill="none" stroke="#6a8ac0"/><path d="M2.5 9.5 H10 M2.5 11.5 H10 M2.5 13.5 H10" stroke="#8aa0d0"/></svg>
<svg style="left:6px;top:861px;" width="13" height="14" viewBox="0 0 13 14"><rect x="0.5" y="0.5" width="11" height="12.5" fill="#fff" stroke="#000" stroke-width="1.2"/><path d="M2.5 3.5 H9.5 M2.5 6 H9.5 M2.5 8.5 H9.5 M2.5 11 H7" stroke="#000"/></svg>
<div style="left:809px;top:319px;width:343px;height:500px;background:#f0f0f0;border-radius:7px 7px 6px 6px;border-bottom:1.3px solid #8764b8"></div>
<div style="left:809px;top:319px;width:343px;height:31px;background:#8764b8;border-radius:7px 7px 0 0"></div>
<div class="t" style="left:817px;top:329.34px;font-size:12px;color:#fff;font-weight:normal;font-style:normal;font-family:'Liberation Sans';letter-spacing:-0.087px;">Add Global Variable List</div>
<svg style="left:1131px;top:328px;" width="12" height="12" viewBox="0 0 12 12"><path d="M1 1 L11 11 M11 1 L1 11" stroke="#fff" stroke-width="1.1"/></svg>
<div style="left:809px;top:350px;width:343px;height:74px;background:#fff"></div>
<div style="left:809px;top:424px;width:343px;height:1px;background:#a0a0a0"></div>
<svg style="left:828px;top:370px;" width="17" height="17" viewBox="0 0 17 17"><defs><radialGradient id="gg" cx="0.45" cy="0.3" r="0.75"><stop offset="0" stop-color="#40c8ff"/><stop offset="0.55" stop-color="#1a6ee8"/><stop offset="1" stop-color="#0a2a98"/></radialGradient></defs><circle cx="7.8" cy="8.2" r="7" fill="url(#gg)"/><path d="M2.5 5.5 Q5 2 9 2.2 Q10 3.5 8.5 5 Q6 6.5 4 7.5 Q2.5 7.5 2.5 5.5 Z" fill="#30b030"/><path d="M10.5 4 Q13.5 5 14.2 8 Q13.5 11 11.5 10.5 Q10 8 10.5 4 Z" fill="#108a20"/><path d="M6.5 9.5 Q8.5 9 8.8 11 Q8 13 6.8 12.5 Z" fill="#10902a"/><ellipse cx="8" cy="8" rx="8.2" ry="3.2" transform="rotate(-45 8 8)" fill="none" stroke="#c8f4ff" stroke-width="1.1" stroke-dasharray="20 6 40"/></svg>
<div class="t" style="left:859.4px;top:383.89px;font-size:11px;color:#000;font-weight:normal;font-style:normal;font-family:'Liberation Sans';letter-spacing:-0.062px;">Create a new global variable list</div>
<div class="t" style="left:822px;top:439.99px;font-size:11px;color:#000;font-weight:normal;font-style:normal;font-family:'Liberation Sans';letter-spacing:-0.1px;">Name</div>
<div style="left:819px;top:455px;width:321px;height:20px;background:#fff;border-bottom:2px solid #0067c0"></div>
<div class="t" style="left:822px;top:458.99px;font-size:11px;color:#000;font-weight:normal;font-style:normal;font-family:'Liberation Sans';letter-spacing:-0.25px;">User_Vars</div>
<div style="left:872px;top:457px;width:1px;height:13px;background:#000"></div>
<div style="left:813px;top:432px;width:339px;height:52px;border:5px solid #ed1c24"></div>
<div style="left:809px;top:769px;width:343px;height:1px;background:#a8a8a8"></div>
<div style="left:809px;top:770px;width:343px;height:1px;background:#ffffff"></div>
<div style="left:985px;top:784px;width:73px;height:21px;background:#fdfdfd;border:1px solid #0067c0;border-radius:4px"></div>
<div class="t" style="left:1010.8px;top:789.82px;font-size:11.2px;color:#000;font-weight:normal;font-style:normal;font-family:'Liberation Sans';letter-spacing:-0.3px;">Add</div>
<div style="left:1066px;top:784px;width:73px;height:21px;background:#fdfdfd;border:1px solid #c8c8c8;border-radius:4px"></div>
<div class="t" style="left:1085.5px;top:789.82px;font-size:11.2px;color:#000;font-weight:normal;font-style:normal;font-family:'Liberation Sans';letter-spacing:-0.45px;">Cancel</div>
<div style="left:969px;top:773px;width:96px;height:39px;border:5px solid #ed1c24"></div>
<svg style="left:688px;top:486px;" width="116" height="42" viewBox="0 0 116 42"><path d="M6.3 12.3 H58.5 V5.2 L110.5 19.8 L58.5 34.6 V27.3 H6.3 Z" fill="#fff" stroke="#ed1c24" stroke-width="4.6" stroke-linejoin="round"/></svg>
<div style="left:261px;top:362px;width:171px;height:215px;background:rgba(0,0,0,0.3);filter:blur(1.2px)"></div>
<div style="left:259px;top:360px;width:170px;height:214px;background:#fcfcfc;border:1px solid #a0a0a0"></div>
<div style="left:260px;top:361px;width:24px;height:212px;background:linear-gradient(to right,#f4f4f4,#efefef)"></div>
<div style="left:292px;top:453px;width:135px;height:1px;background:#c8c8c8"></div>
<div style="left:292px;top:481px;width:135px;height:1px;background:#c8c8c8"></div>
<svg style="left:264px;top:363px;" width="16" height="16" viewBox="0 0 16 16"><path d="M5 1 L9 10 M11 1 L7 10" stroke="#222" stroke-width="1"/><circle cx="5.5" cy="12.5" r="2.3" fill="none" stroke="#2030b0" stroke-width="1.3"/><circle cx="10.5" cy="12.5" r="2.3" fill="none" stroke="#2030b0" stroke-width="1.3"/></svg>
<div class="t" style="left:294.5px;top:366.84px;font-size:12px;color:#000;font-weight:normal;font-style:normal;font-family:'Liberation Sans';letter-spacing:0.375px;">Cut</div>
<svg style="left:264px;top:385px;" width="16" height="16" viewBox="0 0 16 16"><path d="M1.5 1.5 H7 L9 3.5 V11.5 H1.5 Z" fill="#fff" stroke="#222"/><path d="M3 5.5 H7 M3 7.5 H7" stroke="#222"/><path d="M6.5 5.5 H12 L14.5 8 V15.5 H6.5 Z" fill="#fff" stroke="#2030b0"/><path d="M8 10.5 H13 M8 12.5 H13" stroke="#2030b0"/></svg>
<div class="t" style="left:294.5px;top:388.84px;font-size:12px;color:#000;font-weight:normal;font-style:normal;font-family:'Liberation Sans';letter-spacing:0.333px;">Copy</div>
<svg style="left:264px;top:407px;" width="16" height="16" viewBox="0 0 16 16"><rect x="1.5" y="3.5" width="10" height="11" fill="#c8c8c8" stroke="#aaa"/><rect x="4" y="1.5" width="5" height="3" fill="#ddd" stroke="#aaa"/><rect x="6.5" y="8.5" width="8" height="6.5" fill="#eee" stroke="#aaa"/><path d="M8 11 H13 M8 13 H13" stroke="#aaa"/></svg>
<div class="t" style="left:294.5px;top:410.84px;font-size:12px;color:#8a8a8a;font-weight:normal;font-style:normal;font-family:'Liberation Sans';letter-spacing:-0.25px;">Paste</div>
<svg style="left:264px;top:429px;" width="16" height="16" viewBox="0 0 16 16"><path d="M2 2 L14 14 M14 2 L2 14" stroke="#222" stroke-width="1.6"/></svg>
<div class="t" style="left:294.5px;top:432.84px;font-size:12px;color:#000;font-weight:normal;font-style:normal;font-family:'Liberation Sans';letter-spacing:0.0px;">Delete</div>
<svg style="left:264px;top:457px;" width="16" height="16" viewBox="0 0 16 16"><rect x="1.5" y="3.5" width="10" height="10" fill="#eee" stroke="#333"/><rect x="4" y="1.5" width="5" height="3" fill="#fff" stroke="#333"/><rect x="5.5" y="8.5" width="9" height="6" fill="#fff" stroke="#333"/><path d="M7 10.5 H13 M7 12.5 H13" stroke="#2030b0"/></svg>
<div class="t" style="left:294.5px;top:460.84px;font-size:12px;color:#000;font-weight:normal;font-style:normal;font-family:'Liberation Sans';letter-spacing:-0.104px;">Properties...</div>
<div style="left:261px;top:482px;width:166px;height:24px;background:#b8d8f2;border-bottom:1px solid #0078d7"></div>
<svg style="left:264px;top:485px;" width="16" height="16" viewBox="0 0 16 16"><rect x="2.5" y="6.5" width="12" height="9" fill="#fff" stroke="#555"/><circle cx="5" cy="9" r="0.9" fill="#e02020"/><circle cx="8.5" cy="9" r="0.9" fill="#20a020"/><circle cx="12" cy="9" r="0.9" fill="#2040e0"/><circle cx="5" cy="12.5" r="0.9" fill="#2040e0"/><circle cx="8.5" cy="12.5" r="0.9" fill="#e02020"/><circle cx="12" cy="12.5" r="0.9" fill="#20a020"/><path d="M1 1 L5 5 M3 0.5 V3 M0.5 3 H3 M5 1 L2 4" stroke="#f0e040" stroke-width="1"/></svg>
<div class="t" style="left:294.5px;top:488.84px;font-size:12px;color:#000;font-weight:normal;font-style:normal;font-family:'Liberation Sans';letter-spacing:0.056px;">Add Object</div>
<svg style="left:264px;top:507px;" width="16" height="16" viewBox="0 0 16 16"><path d="M1.5 4 V13.5 H14.5 V5.5 H8 L6.5 3.5 H2.5 Z" fill="#f7df7a" stroke="#b88a1a"/><path d="M1.5 6.5 H14.5" stroke="#fff6c0"/></svg>
<div class="t" style="left:294.5px;top:510.84px;font-size:12px;color:#000;font-weight:normal;font-style:normal;font-family:'Liberation Sans';letter-spacing:-0.021px;">Add Folder...</div>
<svg style="left:264px;top:529px;" width="16" height="16" viewBox="0 0 16 16"><path d="M2.5 5.5 H7 L9.5 8 V15.5 H2.5 Z" fill="#fff" stroke="#333"/><path d="M8 4 Q10 1 13 3 M11.5 1.5 L13 3 L11 4" fill="none" stroke="#333"/></svg>
<div class="t" style="left:294.5px;top:532.84px;font-size:12px;color:#000;font-weight:normal;font-style:normal;font-family:'Liberation Sans';letter-spacing:-0.05px;">Edit Object</div>
<div class="t" style="left:294.5px;top:554.84px;font-size:12px;color:#000;font-weight:normal;font-style:normal;font-family:'Liberation Sans';letter-spacing:0.028px;">Edit Object With...</div>
<svg style="left:412.5px;top:491.5px;" width="5" height="8" viewBox="0 0 5 8"><path d="M0.3 0.3 L4.6 4 L0.3 7.7 Z" fill="#000"/></svg>
<div style="left:261px;top:482px;width:166px;height:23px;border:3px solid #ff0000;border-radius:2px"></div>
<div style="left:430px;top:369px;width:250px;height:532px;background:rgba(0,0,0,0.3);filter:blur(1.2px)"></div>
<div style="left:428px;top:367px;width:249px;height:532px;background:#fcfcfc;border:1px solid #8c8c8c"></div>
<div style="left:429px;top:368px;width:24px;height:530px;background:linear-gradient(to right,#f4f4f4,#efefef)"></div>
<svg style="left:433px;top:371px;" width="16" height="16" viewBox="0 0 16 16"><rect x="1.5" y="2.5" width="13" height="12" fill="#ccc" stroke="#333"/><path d="M2 14 L6 4 L10 14 Z M6 14 L10 4 L14 14 Z" fill="#fff" stroke="#e00000" stroke-width="1.8"/><path d="M6 8 V11 M10 8 V11" stroke="#000"/><rect x="2" y="4" width="2" height="1.5" fill="#0c0"/></svg>
<div class="t" style="left:463.4px;top:374.44px;font-size:12px;color:#000;font-weight:normal;font-style:normal;font-family:'Liberation Sans';letter-spacing:0.105px;">Alarm Configuration...</div>
<svg style="left:433px;top:393px;" width="16" height="16" viewBox="0 0 16 16"><path d="M3 13 Q0 13 1 9.5 Q1.5 7 4 7.5 Q5 3 9 4 Q12 4.5 12 8" fill="none" stroke="#2a4060" stroke-width="1.2"/><rect x="7" y="8" width="4" height="7" fill="#1a3050"/><rect x="12" y="9" width="3" height="6" fill="#1a3050"/></svg>
<div class="t" style="left:463.4px;top:396.44px;font-size:12px;color:#000;font-weight:normal;font-style:normal;font-family:'Liberation Sans';letter-spacing:0.178px;">Communication Manager...</div>
<svg style="left:433px;top:415px;" width="16" height="16" viewBox="0 0 16 16"><path d="M2.5 0.5 H11 L14.5 4 V15.5 H2.5 Z" fill="#fff" stroke="#333"/><rect x="1" y="6.5" width="14" height="5" fill="#111"/><path d="M3 8 V10.5 H4.5 M6 8 H7.5 V10.5 H6 Z M10.5 8 H9 V10.5 H10.5 V9.3" stroke="#fff" stroke-width="0.7" fill="none"/></svg>
<div class="t" style="left:463.4px;top:418.44px;font-size:12px;color:#000;font-weight:normal;font-style:normal;font-family:'Liberation Sans';letter-spacing:0.05px;">Datalogger...</div>
<svg style="left:433px;top:437px;" width="16" height="16" viewBox="0 0 16 16"><path d="M1 4 L4 1 L7 4 L4 7 Z" fill="#f0e020" stroke="#333" stroke-width="0.8"/><path d="M9 12 L12 9 L15 12 L12 15 Z" fill="#30c0c0" stroke="#333" stroke-width="0.8"/><path d="M6 6 L10 10" stroke="#333"/><path d="M11 3 L14 6 L11 6 Z" fill="#a020a0"/></svg>
<div class="t" style="left:463.4px;top:440.44px;font-size:12px;color:#000;font-weight:normal;font-style:normal;font-family:'Liberation Sans';letter-spacing:0.08px;">DUT...</div>
<svg style="left:433px;top:459px;" width="16" height="16" viewBox="0 0 16 16"><path d="M2.5 0.5 H11 L14.5 4 V15.5 H2.5 Z" fill="#fff" stroke="#333"/><path d="M4 4.5 H8 M4 6.5 H12 M4 8.5 H12" stroke="#2040c0"/><path d="M6 12 L9 9 L11 12 L13 10" stroke="#e02020" fill="none"/><path d="M4 13.5 H7" stroke="#2040c0"/></svg>
<div class="t" style="left:463.4px;top:462.44px;font-size:12px;color:#000;font-weight:normal;font-style:normal;font-family:'Liberation Sans';letter-spacing:-0.307px;">External File...</div>
<div style="left:429px;top:479px;width:248px;height:22px;background:#b8d8f2;border-top:1px solid #0078d7;border-bottom:1px solid #0078d7"></div>
<svg style="left:433px;top:481px;" width="16" height="16" viewBox="0 0 16 16"><defs><radialGradient id="gg" cx="0.45" cy="0.3" r="0.75"><stop offset="0" stop-color="#40c8ff"/><stop offset="0.55" stop-color="#1a6ee8"/><stop offset="1" stop-color="#0a2a98"/></radialGradient></defs><circle cx="7.8" cy="8.2" r="7" fill="url(#gg)"/><path d="M2.5 5.5 Q5 2 9 2.2 Q10 3.5 8.5 5 Q6 6.5 4 7.5 Q2.5 7.5 2.5 5.5 Z" fill="#30b030"/><path d="M10.5 4 Q13.5 5 14.2 8 Q13.5 11 11.5 10.5 Q10 8 10.5 4 Z" fill="#108a20"/><path d="M6.5 9.5 Q8.5 9 8.8 11 Q8 13 6.8 12.5 Z" fill="#10902a"/><ellipse cx="8" cy="8" rx="8.2" ry="3.2" transform="rotate(-45 8 8)" fill="none" stroke="#c8f4ff" stroke-width="1.1" stroke-dasharray="20 6 40"/></svg>
<div class="t" style="left:463.4px;top:484.44px;font-size:12px;color:#000;font-weight:normal;font-style:normal;font-family:'Liberation Sans';letter-spacing:-0.182px;">Global Variable List...</div>
<svg style="left:433px;top:503px;" width="16" height="16" viewBox="0 0 16 16"><defs><radialGradient id="gg" cx="0.45" cy="0.3" r="0.75"><stop offset="0" stop-color="#40c8ff"/><stop offset="0.55" stop-color="#1a6ee8"/><stop offset="1" stop-color="#0a2a98"/></radialGradient></defs><circle cx="7.8" cy="8.2" r="7" fill="url(#gg)"/><path d="M2.5 5.5 Q5 2 9 2.2 Q10 3.5 8.5 5 Q6 6.5 4 7.5 Q2.5 7.5 2.5 5.5 Z" fill="#30b030"/><path d="M10.5 4 Q13.5 5 14.2 8 Q13.5 11 11.5 10.5 Q10 8 10.5 4 Z" fill="#108a20"/><path d="M6.5 9.5 Q8.5 9 8.8 11 Q8 13 6.8 12.5 Z" fill="#10902a"/><ellipse cx="8" cy="8" rx="8.2" ry="3.2" transform="rotate(-45 8 8)" fill="none" stroke="#c8f4ff" stroke-width="1.1" stroke-dasharray="20 6 40"/><rect x="7.5" y="7.5" width="8" height="8" fill="#fff" stroke="#000"/><path d="M9 9.5 H14 M11.5 9.5 V14" stroke="#000" stroke-width="1.5"/></svg>
<div class="t" style="left:463.4px;top:506.44px;font-size:12px;color:#000;font-weight:normal;font-style:normal;font-family:'Liberation Sans';letter-spacing:-0.141px;">Global Variable List (tasklocal)...</div>
<svg style="left:433px;top:525px;" width="16" height="16" viewBox="0 0 16 16"><path d="M3.5 0.5 H11 L14.5 4 V15.5 H3.5 Z" fill="#fff" stroke="#333"/><rect x="1" y="5" width="2.5" height="6" fill="#108080"/><path d="M5.5 6.5 H8.5 M10 6.5 H13 M5.5 9 H8.5 M10 9 H13 M5.5 11.5 H8.5 M10 11.5 H13" stroke="#777"/></svg>
<div class="t" style="left:463.4px;top:528.44px;font-size:12px;color:#000;font-weight:normal;font-style:normal;font-family:'Liberation Sans';letter-spacing:-0.058px;">Image Pool...</div>
<svg style="left:433px;top:547px;" width="16" height="16" viewBox="0 0 16 16"><path d="M3 8.5 H9" stroke="#222" stroke-width="1.2"/><circle cx="2.5" cy="8.5" r="1.6" fill="#fff" stroke="#222"/><circle cx="12" cy="8.5" r="3.2" fill="#fff" stroke="#222" stroke-width="1.2"/></svg>
<div class="t" style="left:463.4px;top:550.44px;font-size:12px;color:#000;font-weight:normal;font-style:normal;font-family:'Liberation Sans';letter-spacing:-0.064px;">Interface...</div>
<svg style="left:433px;top:569px;" width="16" height="16" viewBox="0 0 16 16"><path d="M1 15 V10 A5 5 0 0 1 6 15 Z" fill="#702080"/><path d="M1 6.5 A8.5 8.5 0 0 1 9.5 15" fill="none" stroke="#702080" stroke-width="2.2"/><path d="M1 2.2 A12.8 12.8 0 0 1 13.8 15" fill="none" stroke="#702080" stroke-width="2.2"/><rect x="1" y="1" width="14" height="2" fill="#702080"/></svg>
<div class="t" style="left:463.4px;top:572.44px;font-size:12px;color:#000;font-weight:normal;font-style:normal;font-family:'Liberation Sans';letter-spacing:-0.046px;">MQTT Client...</div>
<svg style="left:433px;top:591px;" width="16" height="16" viewBox="0 0 16 16"><defs><radialGradient id="gg" cx="0.45" cy="0.3" r="0.75"><stop offset="0" stop-color="#40c8ff"/><stop offset="0.55" stop-color="#1a6ee8"/><stop offset="1" stop-color="#0a2a98"/></radialGradient></defs><circle cx="7.8" cy="8.2" r="7" fill="url(#gg)"/><path d="M2.5 5.5 Q5 2 9 2.2 Q10 3.5 8.5 5 Q6 6.5 4 7.5 Q2.5 7.5 2.5 5.5 Z" fill="#30b030"/><path d="M10.5 4 Q13.5 5 14.2 8 Q13.5 11 11.5 10.5 Q10 8 10.5 4 Z" fill="#108a20"/><path d="M6.5 9.5 Q8.5 9 8.8 11 Q8 13 6.8 12.5 Z" fill="#10902a"/><ellipse cx="8" cy="8" rx="8.2" ry="3.2" transform="rotate(-45 8 8)" fill="none" stroke="#c8f4ff" stroke-width="1.1" stroke-dasharray="20 6 40"/><path d="M14 14 L8 8 M8 12 V8 H12" stroke="#f03010" stroke-width="1.8" fill="none"/></svg>
<div class="t" style="left:463.4px;top:594.44px;font-size:12px;color:#000;font-weight:normal;font-style:normal;font-family:'Liberation Sans';letter-spacing:-0.176px;">Network Variable List (Receiver)...</div>
<svg style="left:433px;top:613px;" width="16" height="16" viewBox="0 0 16 16"><defs><radialGradient id="gg" cx="0.45" cy="0.3" r="0.75"><stop offset="0" stop-color="#40c8ff"/><stop offset="0.55" stop-color="#1a6ee8"/><stop offset="1" stop-color="#0a2a98"/></radialGradient></defs><circle cx="7.8" cy="8.2" r="7" fill="url(#gg)"/><path d="M2.5 5.5 Q5 2 9 2.2 Q10 3.5 8.5 5 Q6 6.5 4 7.5 Q2.5 7.5 2.5 5.5 Z" fill="#30b030"/><path d="M10.5 4 Q13.5 5 14.2 8 Q13.5 11 11.5 10.5 Q10 8 10.5 4 Z" fill="#108a20"/><path d="M6.5 9.5 Q8.5 9 8.8 11 Q8 13 6.8 12.5 Z" fill="#10902a"/><ellipse cx="8" cy="8" rx="8.2" ry="3.2" transform="rotate(-45 8 8)" fill="none" stroke="#c8f4ff" stroke-width="1.1" stroke-dasharray="20 6 40"/><path d="M7 7 L13 13 M13 9 V13 H9" stroke="#f03010" stroke-width="1.8" fill="none"/></svg>
<div class="t" style="left:463.4px;top:616.44px;font-size:12px;color:#000;font-weight:normal;font-style:normal;font-family:'Liberation Sans';letter-spacing:-0.188px;">Network Variable List (Sender)...</div>
<svg style="left:433px;top:635px;" width="16" height="16" viewBox="0 0 16 16"><path d="M2 2 H14 V4 H2 Z" fill="#333"/><path d="M8 4 V14 M5 4 L7 13 M11 4 L9 13" stroke="#333" stroke-width="1.4"/></svg>
<div class="t" style="left:463.4px;top:638.44px;font-size:12px;color:#000;font-weight:normal;font-style:normal;font-family:'Liberation Sans';letter-spacing:-0.268px;">Persistent Variables...</div>
<svg style="left:433px;top:657px;" width="16" height="16" viewBox="0 0 16 16"><rect x="1.5" y="2.5" width="13" height="11" fill="#fff" stroke="#333"/><path d="M2 10 Q4 4 6 10 Q8 13 10 6 H14" fill="none" stroke="#2040e0" stroke-width="1.2"/><path d="M2 9 H6" stroke="#20a020"/></svg>
<div class="t" style="left:463.4px;top:660.44px;font-size:12px;color:#000;font-weight:normal;font-style:normal;font-family:'Liberation Sans';letter-spacing:-0.077px;">PID Control...</div>
<svg style="left:433px;top:679px;" width="16" height="16" viewBox="0 0 16 16"><path d="M1.5 0.5 H10 L13.5 4 V15.5 H1.5 Z" fill="#fff" stroke="#222"/><path d="M10 0.5 V4 H13.5" fill="none" stroke="#222" stroke-width="0.7"/><path d="M2.5 15 H13" stroke="#bbb"/><rect x="6.5" y="3.5" width="4" height="4" fill="none" stroke="#c00" stroke-width="1.1"/><rect x="2.5" y="7.5" width="4" height="4" fill="none" stroke="#080" stroke-width="1.1"/><rect x="6.5" y="7.5" width="4" height="4" fill="none" stroke="#20a" stroke-width="1.1"/><path d="M11 6 H13 M11 8 H13 M11 10 H13" stroke="#666" stroke-width="0.7"/></svg>
<div class="t" style="left:463.4px;top:682.44px;font-size:12px;color:#000;font-weight:normal;font-style:normal;font-family:'Liberation Sans';letter-spacing:-0.28px;">POU...</div>
<svg style="left:433px;top:701px;" width="16" height="16" viewBox="0 0 16 16"><path d="M1.5 0.5 H10 L13.5 4 V15.5 H1.5 Z" fill="#fff" stroke="#222"/><path d="M10 0.5 V4 H13.5" fill="none" stroke="#222" stroke-width="0.7"/><path d="M2.5 15 H13" stroke="#bbb"/><rect x="6.5" y="3.5" width="4" height="4" fill="none" stroke="#c00" stroke-width="1.1"/><rect x="2.5" y="7.5" width="4" height="4" fill="none" stroke="#080" stroke-width="1.1"/><rect x="6.5" y="7.5" width="4" height="4" fill="none" stroke="#20a" stroke-width="1.1"/><path d="M11 6 H13 M11 8 H13 M11 10 H13" stroke="#666" stroke-width="0.7"/></svg>
<div class="t" style="left:463.4px;top:704.44px;font-size:12px;color:#000;font-weight:normal;font-style:normal;font-family:'Liberation Sans';letter-spacing:-0.036px;">POU for Implicit Checks...</div>
<svg style="left:433px;top:723px;" width="16" height="16" viewBox="0 0 16 16"><path d="M1 15 V6 L5 11 L9 6 V15" fill="none" stroke="#b01010" stroke-width="2.8"/><circle cx="6" cy="5" r="4" fill="#a0e0f0" stroke="#333"/><path d="M9 8 L14 14" stroke="#2030b0" stroke-width="1.8"/></svg>
<div class="t" style="left:463.4px;top:726.44px;font-size:12px;color:#000;font-weight:normal;font-style:normal;font-family:'Liberation Sans';letter-spacing:-0.106px;">Recipe Manager...</div>
<svg style="left:433px;top:745px;" width="16" height="16" viewBox="0 0 16 16"><rect x="1" y="1" width="5" height="5" fill="#1010e0"/><rect x="10" y="4" width="5" height="5" fill="#e010e0"/><rect x="10" y="10" width="5" height="5" fill="#10d0e0"/><path d="M6 3.5 H8 V12.5 H10 M8 6.5 H10" stroke="#555" stroke-width="0.8" fill="none"/></svg>
<div class="t" style="left:463.4px;top:748.44px;font-size:12px;color:#000;font-weight:normal;font-style:normal;font-family:'Liberation Sans';letter-spacing:0.105px;">Symbol Configuration...</div>
<svg style="left:433px;top:767px;" width="16" height="16" viewBox="0 0 16 16"><path d="M3.5 0.5 H11 L14.5 4 V15.5 H3.5 Z" fill="#fff" stroke="#333"/><rect x="1" y="5" width="2.5" height="6" fill="#108080"/><path d="M5.5 6.5 H8.5 M10 6.5 H13 M5.5 9 H8.5 M10 9 H13 M5.5 11.5 H8.5 M10 11.5 H13" stroke="#777"/></svg>
<div class="t" style="left:463.4px;top:770.44px;font-size:12px;color:#000;font-weight:normal;font-style:normal;font-family:'Liberation Sans';letter-spacing:-0.236px;">Text List...</div>
<svg style="left:433px;top:789px;" width="16" height="16" viewBox="0 0 16 16"><circle cx="6" cy="9" r="4.5" fill="#60a8e0" stroke="#102060" stroke-width="1.3"/><path d="M3 9 L5 7 L7 10 L9 8" stroke="#fff" fill="none"/><path d="M9 12 L14 15" stroke="#102060" stroke-width="2"/><rect x="9" y="1" width="6" height="7" fill="#eee" stroke="#555"/><path d="M12 2 V5" stroke="#c00"/></svg>
<div class="t" style="left:463.4px;top:792.44px;font-size:12px;color:#000;font-weight:normal;font-style:normal;font-family:'Liberation Sans';letter-spacing:-0.357px;">Trace...</div>
<svg style="left:433px;top:811px;" width="16" height="16" viewBox="0 0 16 16"><rect x="1" y="1" width="8" height="7" fill="#ccc" stroke="#555"/><path d="M6 15 V4 L10 9 L14 4 V15" fill="none" stroke="#b01010" stroke-width="2.4"/><path d="M2 12 H7 M5 10 V14" stroke="#2040e0" stroke-width="1.3"/><path d="M8 15 L11 11 L15 15" fill="none" stroke="#e09020"/></svg>
<div class="t" style="left:463.4px;top:814.44px;font-size:12px;color:#000;font-weight:normal;font-style:normal;font-family:'Liberation Sans';letter-spacing:-0.116px;">Trend Recording Manager...</div>
<svg style="left:433px;top:833px;" width="16" height="16" viewBox="0 0 16 16"><path d="M3 7 Q3 2 9 2 L12 2 M10 0 L12 2 L10 4" fill="none" stroke="#888" stroke-width="1.8"/><path d="M13 9 Q13 14 7 14 L4 14 M6 12 L4 14 L6 16" fill="none" stroke="#888" stroke-width="1.8"/><rect x="12" y="4" width="3" height="3" fill="#2040e0"/><rect x="1" y="10" width="3" height="3" fill="#e02020"/></svg>
<div class="t" style="left:463.4px;top:836.44px;font-size:12px;color:#000;font-weight:normal;font-style:normal;font-family:'Liberation Sans';letter-spacing:0.018px;">Unit Conversion...</div>
<svg style="left:433px;top:855px;" width="16" height="16" viewBox="0 0 16 16"><path d="M2.5 0.5 H11 L14.5 4 V15.5 H2.5 Z" fill="#fff" stroke="#333"/><rect x="4" y="5" width="4" height="4" fill="#e03030"/><rect x="8" y="5" width="4" height="4" fill="#30a030"/><rect x="4" y="9" width="4" height="4" fill="#f0d020"/><rect x="8" y="9" width="4" height="4" fill="#3050e0"/></svg>
<div class="t" style="left:463.4px;top:858.44px;font-size:12px;color:#000;font-weight:normal;font-style:normal;font-family:'Liberation Sans';letter-spacing:-0.133px;">Visualization...</div>
<svg style="left:433px;top:877px;" width="16" height="16" viewBox="0 0 16 16"><path d="M2.5 0.5 H11 L14.5 4 V15.5 H2.5 Z" fill="#fff" stroke="#333"/><rect x="3" y="6" width="10" height="9" fill="#a01010"/><rect x="5" y="4" width="4" height="4" fill="#f0d020"/><path d="M5 11 H11" stroke="#fff"/></svg>
<div class="t" style="left:463.4px;top:880.44px;font-size:12px;color:#000;font-weight:normal;font-style:normal;font-family:'Liberation Sans';letter-spacing:-0.07px;">Visualization Manager...</div>
<div style="left:428px;top:480px;width:250px;height:20px;border:3px solid #ff0000;border-radius:2px"></div></body></html>
